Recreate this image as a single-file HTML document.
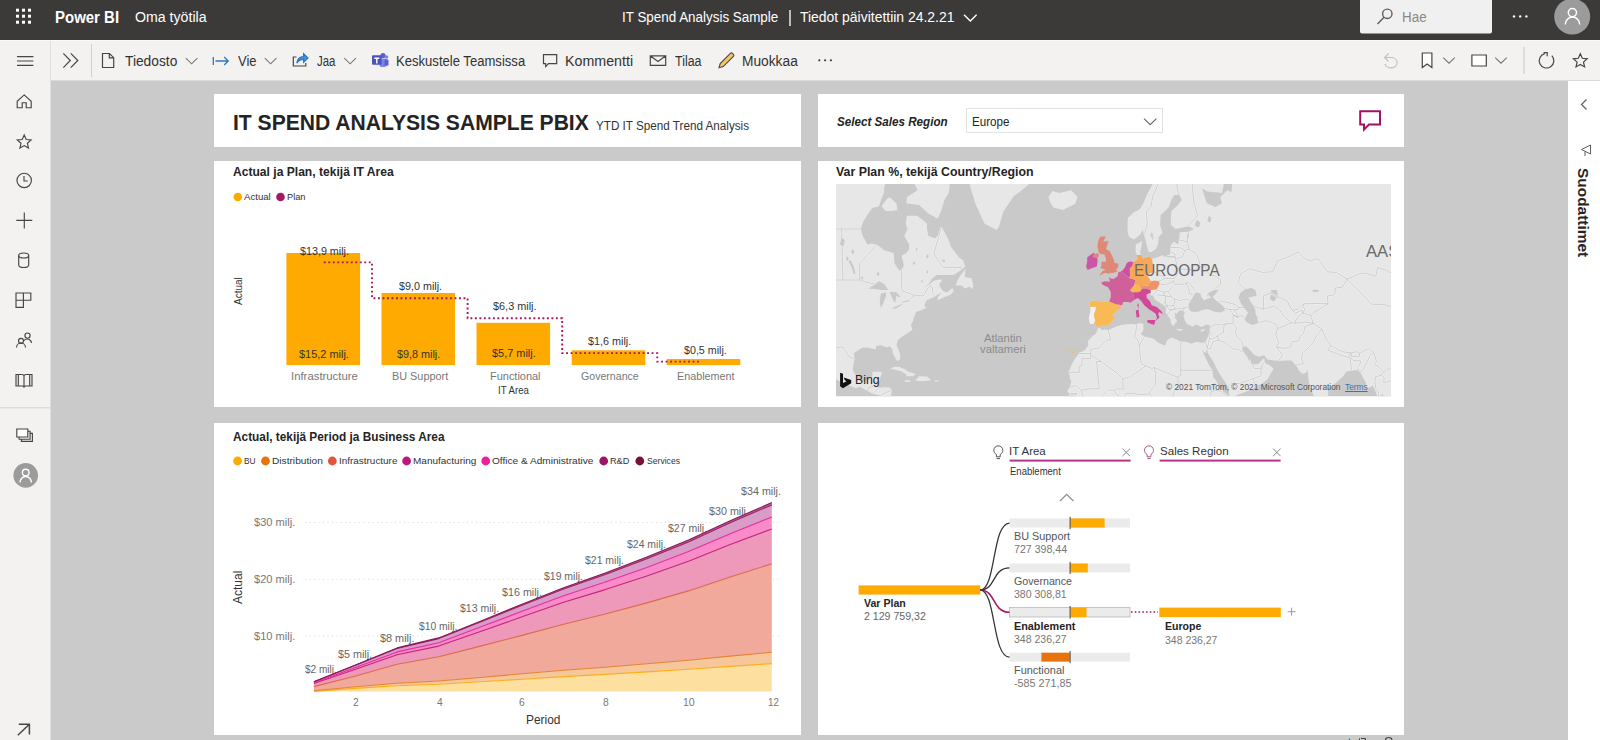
<!DOCTYPE html>
<html><head><meta charset="utf-8">
<style>
*{box-sizing:border-box;margin:0;padding:0}
html,body{width:1600px;height:740px;overflow:hidden}
body{position:relative;background:#cacaca;font-family:"Liberation Sans",sans-serif;color:#252423}
.abs{position:absolute}
.t{position:absolute;white-space:nowrap;line-height:1}
#topbar{left:0;top:0;width:1600px;height:40px;background:#3b3a39}
#toolbar{left:0;top:40px;width:1600px;height:41px;background:#f3f2f1}
#leftnav{left:0;top:81px;width:51px;height:659px;background:#f3f2f1}
#rightpane{left:1568px;top:81px;width:32px;height:659px;background:#fff}
.card{position:absolute;background:#fff}
svg{position:absolute;overflow:visible}
</style></head><body>
<!--TOPBAR-->
<div id="topbar" class="abs">
<svg style="left:0;top:0" width="1600" height="40">
 <g fill="#fff">
  <rect x="16" y="8.7" width="3" height="3"/><rect x="22" y="8.7" width="3" height="3"/><rect x="28" y="8.7" width="3" height="3"/>
  <rect x="16" y="14.7" width="3" height="3"/><rect x="22" y="14.7" width="3" height="3"/><rect x="28" y="14.7" width="3" height="3"/>
  <rect x="16" y="20.7" width="3" height="3"/><rect x="22" y="20.7" width="3" height="3"/><rect x="28" y="20.7" width="3" height="3"/>
 </g>
 <path d="M1360 0H1492V31.5a2 2 0 0 1-2 2H1362a2 2 0 0 1-2-2Z" fill="#f0f0f0"/>
 <g fill="none" stroke="#605e5c" stroke-width="1.4"><circle cx="1387.3" cy="13.8" r="4.7"/><path d="M1384 17.3L1377.5 24"/></g>
 <g fill="#fff"><circle cx="1514" cy="16.4" r="1.2"/><circle cx="1520.2" cy="16.4" r="1.2"/><circle cx="1526.4" cy="16.4" r="1.2"/></g>
 <circle cx="1572.2" cy="16.6" r="18" fill="#9b9b9b"/>
 <g fill="none" stroke="#fff" stroke-width="1.5"><circle cx="1572.4" cy="12.6" r="4.1"/><path d="M1565.3 24.5a7.2 7.5 0 0 1 14.4 0"/></g>
 <path d="M964 14.700l6.300 6.300 6.300-6.300" fill="none" stroke="#fff" stroke-width="1.400"/>
</svg>
<span class="t" id="tPBI" style="top:10px;font-size:16px;font-weight:bold;color:#fff;left:55.36px;transform-origin:0 0;transform:scaleX(0.9356)">Power BI</span>
<span class="t" id="tOma" style="top:10px;font-size:14px;color:#fff;left:135.40px;transform-origin:0 0;transform:scaleX(1.0111)">Oma työtila</span>
<span class="t" id="tITS" style="top:10px;font-size:14px;color:#fff;left:622.04px;transform-origin:0 0;transform:scaleX(0.9577)">IT Spend Analysis Sample</span>
<div class="abs" style="left:789px;top:10px;width:1.500px;height:15.500px;background:#bebbb8"></div>
<span class="t" id="tTied" style="top:10px;font-size:14px;color:#fff;left:800.00px;transform-origin:0 0;transform:scaleX(0.9958)">Tiedot päivitettiin 24.2.21</span>
<span class="t" id="tHae" style="top:10px;font-size:14px;color:#8a8886;left:1402.44px;transform-origin:0 0;transform:scaleX(0.9580)">Hae</span>
</div>
<!--TOOLBAR-->
<div id="toolbar" class="abs">
<svg style="left:0;top:0" width="1600" height="41">
 <rect x="0" y="0" width="1600" height="1" fill="#faf9f8"/>
 <rect x="51" y="40" width="1549" height="1" fill="#dddbd9"/>
 <rect x="50" y="1" width="1" height="40" fill="#e1dfdd"/>
 <rect x="91" y="4" width="1" height="33" fill="#d2d0ce"/>
 <rect x="1523.5" y="7" width="1" height="27" fill="#c8c6c4"/>
 <g stroke="#484644" stroke-width="1.2" fill="none">
  <path d="M17 16.6H33.4M17 21H33.4M17 25.4H33.4"/>
  <path d="M63.3 13.3l7 7.2-7 7.2M70.8 13.3l7 7.2-7 7.2"/>
  <!-- file -->
  <path d="M102.5 13.5h7l4.2 4.2v9.8h-11.2zM109.3 13.6v4.3h4.3"/>
  <!-- chevrons -->
  <path stroke="#7a7876" stroke-width="1.1" d="M185.8 18.2l5.8 5.6 5.8-5.6M264.8 18.2l5.8 5.6 5.8-5.6M344.3 18.2l5.8 5.6 5.8-5.6M1443.2 17.6l5.8 5.6 5.8-5.6M1495.2 17.6l5.8 5.6 5.8-5.6"/>
  <!-- comment -->
  <path d="M543.5 14.6h13.2v9h-8.2l-2.8 3v-3h-2.2z"/>
  <!-- mail -->
  <path d="M650.3 15.8h15.4v9.6h-15.4zM650.5 16l7.5 5.5 7.5-5.500"/>
  <!-- bookmark -->
  <path fill="#fff" d="M1422.3 13h9.6v14.6l-4.8-3.6-4.8 3.600z"/>
  <!-- rect -->
  <path fill="#fff" d="M1471.9 15h14.400v11h-14.400z"/>
  <!-- refresh -->
  <path d="M1544.800 13.600a7.300 7.300 0 1 0 7 2M1543.600 12.600h3.600v3.600"/>
  <!-- star -->
  <path d="M1580.300 13.800l2 4.500 4.900.5-3.700 3.300 1.100 4.800-4.300-2.500-4.300 2.500 1.100-4.800-3.700-3.300 4.900-.5z"/>
 </g>
 <!-- undo (disabled) -->
 <g stroke="#c2c0be" stroke-width="1.200" fill="none"><path d="M1385 17.500h6a6.200 5.200 0 1 1-6 6.500M1388.500 13.500l-3.800 4 3.800 4"/></g>
 <!-- export arrow -->
 <g stroke="#2b79c2" stroke-width="1.300" fill="none"><path d="M213.300 17v8M215.500 21h12.500M224.200 17l4 4-4 4"/></g>
 <!-- share -->
 <g fill="none" stroke-width="1.200"><path d="M296.500 17h-3.200v9h12.500v-3" stroke="#484644"/><path d="M296.800 23.200c.6-4.500 3.400-6.500 6.800-6.600v-3l4.400 4.400-4.400 4.400v-3c-3-.1-5 .8-6.800 3.800z" stroke="#2b79c2" fill="#4a90d9"/></g>
 <!-- teams -->
 <g><circle cx="383" cy="15.500" r="2.600" fill="#5b5fc7"/><circle cx="386.600" cy="17" r="1.700" fill="#7b83eb"/><rect x="379.500" y="18.600" width="7" height="8.500" rx="2" fill="#7b83eb"/><rect x="384.500" y="19.200" width="4" height="6.500" rx="1.500" fill="#5b5fc7"/><rect x="372" y="15.200" width="9.600" height="9.600" rx="1" fill="#4b53bc"/><path d="M374.300 17.600h5v1.300h-1.800v4.500h-1.400v-4.500h-1.800z" fill="#fff"/></g>
 <!-- pencil -->
 <g stroke="#484644" stroke-width="1.100" fill="#f4c56a"><path d="M719 27.800l1.200-4.200 10.200-10.200a1.500 1.500 0 0 1 2.100 0l.9.900a1.500 1.500 0 0 1 0 2.100l-10.200 10.200z"/></g>
 <g fill="#484644"><circle cx="819.300" cy="20.300" r="1.150"/><circle cx="825.100" cy="20.300" r="1.150"/><circle cx="830.900" cy="20.300" r="1.150"/></g>
</svg>
<span class="t" id="tTie" style="top:13.500px;font-size:14px;color:#323130;left:124.70px;transform-origin:0 0;transform:scaleX(0.9833)">Tiedosto</span>
<span class="t" id="tVie" style="top:13.500px;font-size:14px;color:#323130;left:237.80px;transform-origin:0 0;transform:scaleX(0.9260)">Vie</span>
<span class="t" id="tJaa" style="top:13.500px;font-size:14px;color:#323130;left:317.10px;transform-origin:0 0;transform:scaleX(0.8163)">Jaa</span>
<span class="t" id="tKes" style="top:13.500px;font-size:14px;color:#323130;left:395.67px;transform-origin:0 0;transform:scaleX(0.9342)">Keskustele Teamsissa</span>
<span class="t" id="tKom" style="top:13.500px;font-size:14px;color:#323130;left:565.23px;transform-origin:0 0;transform:scaleX(1.0175)">Kommentti</span>
<span class="t" id="tTil" style="top:13.500px;font-size:14px;color:#323130;left:674.60px;transform-origin:0 0;transform:scaleX(0.8872)">Tilaa</span>
<span class="t" id="tMuo" style="top:13.500px;font-size:14px;color:#323130;left:742.42px;transform-origin:0 0;transform:scaleX(0.9818)">Muokkaa</span>
</div>
<!--LEFTNAV-->
<div id="leftnav" class="abs">
<svg style="left:0;top:-81px" width="51" height="740">
 <rect x="50" y="81" width="1" height="659" fill="#e1dfdd"/>
 <rect x="0" y="407" width="50" height="1.500" fill="#dedcda"/>
 <g stroke="#484644" stroke-width="1.150" fill="none" stroke-linejoin="miter">
  <!-- home -->
  <path d="M17.200 101.200l7-6.300 7 6.300v6.500h-5v-5h-4v5h-5z"/>
  <!-- star -->
  <path d="M24.200 135l2 4.500 4.900.5-3.700 3.300 1.100 4.800-4.300-2.500-4.300 2.500 1.100-4.800-3.700-3.300 4.900-.5z"/>
  <!-- clock -->
  <circle cx="24.200" cy="180.400" r="7.200"/><path d="M24 176v5h3.800"/>
  <!-- plus -->
  <path d="M16.300 220.400h16M24.300 212.400v16"/>
  <!-- cylinder -->
  <path d="M18.700 255.500v9.500a5 2.500 0 0 0 10 0v-9.500"/><ellipse cx="23.700" cy="255.500" rx="5" ry="2.500"/>
  <!-- apps -->
  <path d="M16 293h14.800v7.200h-7.400v7.200h-7.400zM23.400 293v7.200M16 300.200h7.400"/>
  <!-- people -->
  <circle cx="27.500" cy="335.600" r="2.600"/><circle cx="21" cy="340.800" r="2.500"/><path d="M16.500 347.500a4.500 4.500 0 0 1 9 0M24 340.500a4.300 4.300 0 0 1 7.500 2.500"/>
  <!-- book -->
  <path d="M16 374.500h6a2 2 0 0 1 2 1.500a2 2 0 0 1 2-1.500h6v11.500h-6a2 2 0 0 0-2 1a2 2 0 0 0-2-1h-6zM24 376v11M18.300 374.500v11M29.700 374.500v11"/>
  <!-- pages -->
  <path d="M27.800 431.200h2.300v8h-11v-2.200M30.100 433.400h2.300v8h-11v-2.200"/><path fill="#fff" d="M16.800 429h11v8h-11z"/>
  <!-- arrow -->
  <path d="M17.800 735.300L29.400 724.300M18.800 724.300H29.400V734.600" stroke-width="1.500"/>
 </g>
 <circle cx="25.700" cy="475.400" r="12.300" fill="#9b9b9b"/>
 <g fill="none" stroke="#fff" stroke-width="1.400"><circle cx="25.700" cy="472.500" r="3.300"/><path d="M20 482.500a5.700 6 0 0 1 11.400 0"/></g>
</svg>
</div>
<!--RIGHTPANE-->
<div id="rightpane" class="abs">
<svg style="left:0;top:0" width="32" height="659">
 <path d="M18.500 18.500l-5 5 5 5" fill="none" stroke="#605e5c" stroke-width="1.200"/>
 <path d="M22.500 64l-9 4.500 9 4.500zM17 70.500v4.500" fill="none" stroke="#605e5c" stroke-width="1"/>
</svg>
<span class="t" id="tSuo" style="left:23px;top:87px;font-size:15px;font-weight:bold;color:#252423;transform-origin:0 0;transform:rotate(90deg) scaleX(1.03)">Suodattimet</span>
</div>
<!--CARDS-->
<div class="card" style="left:214px;top:94px;width:586.5px;height:52.5px"></div>
<div class="card" style="left:214px;top:161px;width:586.5px;height:245.5px"></div>
<div class="card" style="left:214px;top:423px;width:586.5px;height:311.5px"></div>
<div class="card" style="left:817.5px;top:94px;width:586px;height:52.5px"></div>
<div class="card" style="left:817.5px;top:161px;width:586px;height:245.5px"></div>
<div class="card" style="left:817.5px;top:423px;width:586px;height:311.5px"></div>
<span class="t" id="tTitle" style="top:112.00px;font-size:22.5px;font-weight:bold;color:#252423;left:232.56px;transform-origin:0 0;transform:scaleX(0.9371)">IT SPEND ANALYSIS SAMPLE PBIX</span>
<span class="t" id="tYTD" style="top:120.00px;font-size:12px;color:#333;left:596.20px;transform-origin:0 0;transform:scaleX(0.9736)">YTD IT Spend Trend Analysis</span>
<span class="t" id="tC2" style="top:166.00px;font-size:12.5px;font-weight:bold;color:#252423;left:233.10px;transform-origin:0 0;transform:scaleX(0.9668)">Actual ja Plan, tekijä IT Area</span>
<svg style="left:0;top:0" width="1600" height="740"><circle cx="237.8" cy="197" r="4.3" fill="#ffaa00"/><circle cx="280.5" cy="197" r="4.3" fill="#a4195f"/><rect x="286.4" y="253" width="73.7" height="112.1" fill="#ffaa00"/><rect x="381.5" y="293" width="73.5" height="72.1" fill="#ffaa00"/><rect x="476.5" y="322.8" width="73.6" height="42.3" fill="#ffaa00"/><rect x="571.7" y="350.3" width="73.6" height="14.8" fill="#ffaa00"/><rect x="666.7" y="359" width="73.6" height="6.1" fill="#ffaa00"/><path d="M323.8 262.4H372V298.2H467.600V318.300H562.200V353.100H657.300V361.600H701" fill="none" stroke="#a4195f" stroke-width="1.900" stroke-dasharray="1.900 2.600"/></svg>
<span class="t" id="tL1a" style="top:192.00px;font-size:9.5px;color:#333;left:244.00px;transform-origin:0 0;transform:scaleX(1.0117)">Actual</span>
<span class="t" id="tL1b" style="top:192.00px;font-size:9.5px;color:#333;left:287.10px;transform-origin:0 0;transform:scaleX(0.9717)">Plan</span>
<span class="t" id="tB1" style="top:246.00px;font-size:11px;color:#333;left:300.40px;transform-origin:0 0;transform:scaleX(0.9765)">$13,9 milj.</span>
<span class="t" id="tB2" style="top:349.00px;font-size:11px;color:#333;left:298.80px;transform-origin:0 0;transform:scaleX(0.9945)">$15,2 milj.</span>
<span class="t" id="tB3" style="top:281.00px;font-size:11px;color:#333;left:398.70px;transform-origin:0 0;transform:scaleX(0.9782)">$9,0 milj.</span>
<span class="t" id="tB4" style="top:349.00px;font-size:11px;color:#333;left:397.30px;transform-origin:0 0;transform:scaleX(0.9827)">$9,8 milj.</span>
<span class="t" id="tB5" style="top:301.00px;font-size:11px;color:#333;left:493.40px;transform-origin:0 0;transform:scaleX(0.9895)">$6,3 milj.</span>
<span class="t" id="tB6" style="top:348.00px;font-size:11px;color:#333;left:492.25px;transform-origin:0 0;transform:scaleX(0.9929)">$5,7 milj.</span>
<span class="t" id="tB7" style="top:336.00px;font-size:11px;color:#333;left:588.40px;transform-origin:0 0;transform:scaleX(0.9827)">$1,6 milj.</span>
<span class="t" id="tB8" style="top:345.00px;font-size:11px;color:#333;left:683.50px;transform-origin:0 0;transform:scaleX(0.9725)">$0,5 milj.</span>
<span class="t" id="tX1" style="top:371.00px;font-size:11px;color:#777;left:290.67px;transform-origin:0 0;transform:scaleX(1.0316)">Infrastructure</span>
<span class="t" id="tX2" style="top:371.00px;font-size:11px;color:#777;left:391.80px;transform-origin:0 0;transform:scaleX(0.9875)">BU Support</span>
<span class="t" id="tX3" style="top:371.00px;font-size:11px;color:#777;left:489.60px;transform-origin:0 0;transform:scaleX(0.9959)">Functional</span>
<span class="t" id="tX4" style="top:371.00px;font-size:11px;color:#777;left:580.90px;transform-origin:0 0;transform:scaleX(0.9631)">Governance</span>
<span class="t" id="tX5" style="top:371.00px;font-size:11px;color:#777;left:676.60px;transform-origin:0 0;transform:scaleX(0.9804)">Enablement</span>
<span class="t" id="tX6" style="top:385.00px;font-size:11px;color:#333;left:497.92px;transform-origin:0 0;transform:scaleX(0.8762)">IT Area</span>
<span class="t" style="left:233.500px;top:304.500px;font-size:10px;color:#333;transform-origin:0 0;transform:rotate(-90deg)">Actual</span>
<span class="t" id="tC3" style="top:431.00px;font-size:12.5px;font-weight:bold;color:#252423;left:233.30px;transform-origin:0 0;transform:scaleX(0.9475)">Actual, tekijä Period ja Business Area</span>
<span class="t" id="tA0" style="top:456.00px;font-size:9.5px;color:#333;left:244.20px;transform-origin:0 0;transform:scaleX(0.8773)">BU</span>
<span class="t" id="tA1" style="top:456.00px;font-size:9.5px;color:#333;left:272.30px;transform-origin:0 0;transform:scaleX(1.0691)">Distribution</span>
<span class="t" id="tA2" style="top:456.00px;font-size:9.5px;color:#333;left:338.75px;transform-origin:0 0;transform:scaleX(1.0443)">Infrastructure</span>
<span class="t" id="tA3" style="top:456.00px;font-size:9.5px;color:#333;left:413.20px;transform-origin:0 0;transform:scaleX(1.0523)">Manufacturing</span>
<span class="t" id="tA4" style="top:456.00px;font-size:9.5px;color:#333;left:492.30px;transform-origin:0 0;transform:scaleX(1.0624)">Office &amp; Administrative</span>
<span class="t" id="tA5" style="top:456.00px;font-size:9.5px;color:#333;left:610.30px;transform-origin:0 0;transform:scaleX(0.9655)">R&amp;D</span>
<span class="t" id="tA6" style="top:456.00px;font-size:9.5px;color:#333;left:646.60px;transform-origin:0 0;transform:scaleX(0.9052)">Services</span>
<svg style="left:0;top:0" width="1600" height="740"><circle cx="237.6" cy="461" r="4.400" fill="#ffaa00"/><circle cx="265.5" cy="461" r="4.400" fill="#e8720c"/><circle cx="332.3" cy="461" r="4.400" fill="#de5540"/><circle cx="406.6" cy="461" r="4.400" fill="#c0167a"/><circle cx="485.7" cy="461" r="4.400" fill="#ee1d9a"/><circle cx="603.7" cy="461" r="4.400" fill="#9c1668"/><circle cx="639.8" cy="461" r="4.400" fill="#7a1035"/><path d="M305 522.5H781" stroke="#d6d6d6" stroke-width="1" stroke-dasharray="1 3.500"/><path d="M305 579.3H781" stroke="#d6d6d6" stroke-width="1" stroke-dasharray="1 3.500"/><path d="M305 636H781" stroke="#d6d6d6" stroke-width="1" stroke-dasharray="1 3.500"/></svg>
<span class="t" id="tD0" style="top:664.00px;font-size:11px;color:#666;left:305.00px;transform-origin:0 0;transform:scaleX(0.9142)">$2 milj.</span>
<span class="t" id="tD1" style="top:649.00px;font-size:11px;color:#666;left:337.70px;transform-origin:0 0;transform:scaleX(0.9803)">$5 milj.</span>
<span class="t" id="tD2" style="top:633.00px;font-size:11px;color:#666;left:379.60px;transform-origin:0 0;transform:scaleX(0.9889)">$8 milj.</span>
<span class="t" id="tD3" style="top:621.00px;font-size:11px;color:#666;left:418.50px;transform-origin:0 0;transform:scaleX(0.9363)">$10 milj.</span>
<span class="t" id="tD4" style="top:603.00px;font-size:11px;color:#666;left:460.00px;transform-origin:0 0;transform:scaleX(0.9535)">$13 milj.</span>
<span class="t" id="tD5" style="top:587.00px;font-size:11px;color:#666;left:501.60px;transform-origin:0 0;transform:scaleX(0.9755)">$16 milj.</span>
<span class="t" id="tD6" style="top:571.00px;font-size:11px;color:#666;left:543.80px;transform-origin:0 0;transform:scaleX(0.9510)">$19 milj.</span>
<span class="t" id="tD7" style="top:555.00px;font-size:11px;color:#666;left:585.00px;transform-origin:0 0;transform:scaleX(0.9510)">$21 milj.</span>
<span class="t" id="tD8" style="top:539.00px;font-size:11px;color:#666;left:626.50px;transform-origin:0 0;transform:scaleX(0.9510)">$24 milj.</span>
<span class="t" id="tD9" style="top:523.00px;font-size:11px;color:#666;left:668.00px;transform-origin:0 0;transform:scaleX(0.9535)">$27 milj.</span>
<span class="t" id="tD10" style="top:506.00px;font-size:11px;color:#666;left:709.20px;transform-origin:0 0;transform:scaleX(0.9755)">$30 milj.</span>
<span class="t" id="tD11" style="top:486.00px;font-size:11px;color:#666;left:740.70px;transform-origin:0 0;transform:scaleX(0.9755)">$34 milj.</span>
<svg style="left:0;top:0" width="1600" height="740"><path d="M313.9 691.4 355.5 688.4 397.1 685.8 438.7 684.3 480.4 681.8 522.0 679.2 563.6 676.6 605.3 674.4 646.9 671.9 688.5 669.3 730.2 666.4 771.8 663.6 L771.8 691.6 730.2 691.6 688.5 691.6 646.9 691.6 605.3 691.6 563.6 691.6 522.0 691.6 480.4 691.6 438.7 691.6 397.1 691.6 355.5 691.6 313.9 691.6 Z" fill="#fde0a0"/><path d="M313.9 690.8 355.5 686.8 397.1 683.2 438.7 681.0 480.4 677.5 522.0 673.8 563.6 670.3 605.3 667.2 646.9 663.8 688.5 660.2 730.2 656.1 771.8 652.2 L771.8 663.6 730.2 666.4 688.5 669.3 646.9 671.9 605.3 674.4 563.6 676.6 522.0 679.2 480.4 681.8 438.7 684.3 397.1 685.8 355.5 688.4 313.9 691.4 Z" fill="#f6c79a"/><path d="M313.9 686.6 355.5 676.0 397.1 664.2 438.7 656.8 480.4 646.1 522.0 635.4 563.6 624.2 605.3 614.0 646.9 602.9 688.5 590.9 730.2 577.1 771.8 563.8 L771.8 652.2 730.2 656.1 688.5 660.2 646.9 663.8 605.3 667.2 563.6 670.3 522.0 673.8 480.4 677.5 438.7 681.0 397.1 683.2 355.5 686.8 313.9 690.8 Z" fill="#f0a99a"/><path d="M313.9 683.5 355.5 669.2 397.1 654.7 438.7 646.1 480.4 631.6 522.0 616.8 563.6 602.3 605.3 589.6 646.9 575.9 688.5 561.3 730.2 544.6 771.8 529.0 L771.8 563.8 730.2 577.1 688.5 590.9 646.9 602.9 605.3 614.0 563.6 624.2 522.0 635.4 480.4 646.1 438.7 656.8 397.1 664.2 355.5 676.0 313.9 686.6 Z" fill="#ee99b9"/><path d="M313.9 682.8 355.5 667.5 397.1 651.9 438.7 642.7 480.4 627.1 522.0 611.2 563.6 595.7 605.3 582.1 646.9 567.4 688.5 551.6 730.2 533.8 771.8 517.0 L771.8 529.0 730.2 544.6 688.5 561.3 646.9 575.9 605.3 589.6 563.6 602.3 522.0 616.8 480.4 631.6 438.7 646.1 397.1 654.7 355.5 669.2 313.9 683.5 Z" fill="#f98bc9"/><path d="M313.9 681.8 355.5 665.2 397.1 648.4 438.7 638.6 480.4 622.1 522.0 605.2 563.6 589.0 605.3 574.4 646.9 558.7 688.5 541.9 730.2 522.8 771.8 504.9 L771.8 517.0 730.2 533.8 688.5 551.6 646.9 567.4 605.3 582.1 563.6 595.7 522.0 611.2 480.4 627.1 438.7 642.7 397.1 651.9 355.5 667.5 313.9 682.8 Z" fill="#d99cc6"/><path d="M313.9 681.7 355.5 664.9 397.1 647.9 438.7 637.9 480.4 621.2 522.0 604.2 563.6 587.7 605.3 573.0 646.9 557.1 688.5 540.0 730.2 520.7 771.8 502.6 L771.8 504.9 730.2 522.8 688.5 541.9 646.9 558.7 605.3 574.4 563.6 589.0 522.0 605.2 480.4 622.1 438.7 638.6 397.1 648.4 355.5 665.2 313.9 681.8 Z" fill="#b0608a"/><path d="M313.9 691.4 355.5 688.4 397.1 685.8 438.7 684.3 480.4 681.8 522.0 679.2 563.6 676.6 605.3 674.4 646.9 671.9 688.5 669.3 730.2 666.4 771.8 663.6" fill="none" stroke="#ffae1a" stroke-width="1.100" stroke-linejoin="round"/><path d="M313.9 690.8 355.5 686.8 397.1 683.2 438.7 681.0 480.4 677.5 522.0 673.8 563.6 670.3 605.3 667.2 646.9 663.8 688.5 660.2 730.2 656.1 771.8 652.2" fill="none" stroke="#e5842e" stroke-width="1.100" stroke-linejoin="round"/><path d="M313.9 686.6 355.5 676.0 397.1 664.2 438.7 656.8 480.4 646.1 522.0 635.4 563.6 624.2 605.3 614.0 646.9 602.9 688.5 590.9 730.2 577.1 771.8 563.8" fill="none" stroke="#dc6a4a" stroke-width="1.100" stroke-linejoin="round"/><path d="M313.9 683.5 355.5 669.2 397.1 654.7 438.7 646.1 480.4 631.6 522.0 616.8 563.6 602.3 605.3 589.6 646.9 575.9 688.5 561.3 730.2 544.6 771.8 529.0" fill="none" stroke="#c2247c" stroke-width="1.100" stroke-linejoin="round"/><path d="M313.9 682.8 355.5 667.5 397.1 651.9 438.7 642.7 480.4 627.1 522.0 611.2 563.6 595.7 605.3 582.1 646.9 567.4 688.5 551.6 730.2 533.8 771.8 517.0" fill="none" stroke="#ea2aa0" stroke-width="1.100" stroke-linejoin="round"/><path d="M313.9 681.8 355.5 665.2 397.1 648.4 438.7 638.6 480.4 622.1 522.0 605.2 563.6 589.0 605.3 574.4 646.9 558.7 688.5 541.9 730.2 522.8 771.8 504.9" fill="none" stroke="#9d2172" stroke-width="1.100" stroke-linejoin="round"/><path d="M313.9 681.7 355.5 664.9 397.1 647.9 438.7 637.9 480.4 621.2 522.0 604.2 563.6 587.7 605.3 573.0 646.9 557.1 688.5 540.0 730.2 520.7 771.8 502.6" fill="none" stroke="#8c1a58" stroke-width="1.100" stroke-linejoin="round"/></svg>
<span class="t" id="tY0" style="top:517.00px;font-size:11px;color:#777;left:254.10px;transform-origin:0 0;transform:scaleX(1.0060)">$30 milj.</span>
<span class="t" id="tY1" style="top:574.00px;font-size:11px;color:#777;left:254.10px;transform-origin:0 0;transform:scaleX(1.0060)">$20 milj.</span>
<span class="t" id="tY2" style="top:631.00px;font-size:11px;color:#777;left:254.10px;transform-origin:0 0;transform:scaleX(1.0060)">$10 milj.</span>
<span class="t" id="tP0" style="top:697.00px;font-size:11px;color:#777;left:352.80px;transform-origin:0 0;transform:scaleX(0.9333)">2</span>
<span class="t" id="tP1" style="top:697.00px;font-size:11px;color:#777;left:436.50px;transform-origin:0 0;transform:scaleX(0.9333)">4</span>
<span class="t" id="tP2" style="top:697.00px;font-size:11px;color:#777;left:519.20px;transform-origin:0 0;transform:scaleX(0.9333)">6</span>
<span class="t" id="tP3" style="top:697.00px;font-size:11px;color:#777;left:602.60px;transform-origin:0 0;transform:scaleX(0.9333)">8</span>
<span class="t" id="tP4" style="top:697.00px;font-size:11px;color:#777;left:683.30px;transform-origin:0 0;transform:scaleX(0.9573)">10</span>
<span class="t" id="tP5" style="top:697.00px;font-size:11px;color:#777;left:767.60px;transform-origin:0 0;transform:scaleX(0.8830)">12</span>
<span class="t" id="tPer" style="top:714.00px;font-size:12px;color:#333;left:525.60px;transform-origin:0 0;transform:scaleX(0.9908)">Period</span>
<span class="t" style="left:232px;top:603.500px;font-size:12px;color:#333;transform-origin:0 0;transform:rotate(-90deg)">Actual</span>
<span class="t" id="tSel" style="top:115.00px;font-size:13px;font-weight:bold;font-style:italic;color:#252423;left:836.90px;transform-origin:0 0;transform:scaleX(0.8956)">Select Sales Region</span>
<div class="abs" style="left:966px;top:108px;width:196.500px;height:24.500px;border:1px solid #e3e3e3;background:#fff"></div>
<span class="t" id="tEur" style="top:116.00px;font-size:12px;color:#252423;left:972.30px;transform-origin:0 0;transform:scaleX(0.9687)">Europe</span>
<svg style="left:0;top:0" width="1600" height="740"><path d="M1144 118.700l6.200 6 6.200-6" fill="none" stroke="#666" stroke-width="1.100"/><path d="M1360.200 111.300h19.800v13.300h-11l-5 5v-5h-3.800z" fill="none" stroke="#a01264" stroke-width="2" stroke-linejoin="miter"/></svg>
<span class="t" id="tC5" style="top:166.00px;font-size:12.5px;font-weight:bold;color:#252423;left:836.00px;transform-origin:0 0;transform:scaleX(0.9879)">Var Plan %, tekijä Country/Region</span>
<svg style="left:0;top:0" width="1600" height="740"><defs><clipPath id="mc"><rect x="836" y="184" width="555" height="212.300"/></clipPath></defs><g clip-path="url(#mc)"><rect x="836" y="184" width="555" height="213" fill="#c9c9c9"/><path d="M881.1 396.9 880.0 395.5 877.6 394.9 870.9 393.0 867.2 390.8 859.7 386.7 856.2 388.2 847.2 384.8 840.2 381.6 833.8 378.0 830.9 373.1 820.2 346.5 820.2 120.3 895.0 120.3 895.0 165.0 887.0 176.3 883.7 190.3 884.3 191.6 881.6 198.8 878.9 206.2 872.3 208.1 868.3 213.4 862.9 222.5 860.8 229.0 862.4 235.3 867.5 244.4 871.5 243.4 877.6 244.9 884.3 250.2 893.6 253.0 894.4 263.0 899.0 270.4 901.4 270.8 903.8 265.2 901.6 255.8 906.4 253.0 909.1 249.2 909.1 244.4 904.3 235.8 907.5 229.0 905.6 223.6 907.0 215.7 917.1 215.7 923.0 220.3 927.0 223.6 927.0 229.0 928.3 235.8 935.0 238.4 939.0 234.3 941.4 226.9 944.4 231.7 948.4 239.4 951.0 246.8 956.4 253.9 959.0 257.6 963.0 259.9 965.2 266.5 961.2 270.0 953.7 275.1 936.6 275.1 931.5 279.2 929.7 282.8 923.8 288.8 927.0 286.0 933.7 280.8 940.4 279.2 942.2 280.8 939.0 284.0 940.4 287.6 943.0 291.1 947.0 292.6 952.4 288.0 953.7 291.1 951.0 294.5 944.4 297.2 937.4 300.2 937.7 297.2 941.7 292.6 937.7 294.5 935.0 296.4 931.8 297.9 926.5 300.5 924.3 305.3 925.1 306.7 927.0 307.8 923.0 309.2 921.7 310.3 916.3 311.7 913.9 317.6 913.1 320.7 911.0 324.4 912.3 330.0 905.6 334.2 900.6 337.7 897.9 340.2 896.6 345.2 899.0 351.1 900.3 355.6 900.0 359.2 897.6 361.2 895.5 358.6 892.8 353.2 892.3 349.2 889.6 346.2 887.0 347.4 881.1 345.2 878.9 345.5 876.3 345.9 875.7 349.5 868.3 347.7 863.5 347.4 860.8 348.6 853.8 353.2 854.5 358.9 852.6 369.7 857.3 378.2 861.9 381.2 868.8 379.9 872.3 376.5 872.5 371.7 878.9 371.7 882.1 372.6 879.5 380.2 876.8 387.2 880.3 387.8 884.3 387.2 889.6 387.5 891.8 390.0 891.0 396.9 Z" fill="#e7e7e7"/><path d="M937.7 218.6 928.3 213.4 919.0 205.0 906.2 203.2 907.0 196.9 917.7 190.3 911.0 176.3 911.0 120.3 948.4 120.3 949.7 186.9 948.4 193.6 944.4 200.0 941.4 210.5 Z" fill="#e7e7e7"/><path d="M885.6 211.1 881.6 206.2 887.0 198.8 889.6 196.9 896.3 203.2 897.6 209.9 892.3 211.1 Z" fill="#e7e7e7"/><path d="M972.4 289.2 973.2 285.6 972.4 281.2 971.1 278.0 964.6 277.1 965.7 269.1 960.6 275.1 957.7 280.0 955.6 285.6 961.7 285.6 964.9 288.4 969.7 286.8 Z" fill="#e7e7e7"/><path d="M996.7 230.1 984.4 223.6 975.9 205.0 970.3 186.9 959.0 120.3 1065.8 120.3 1055.2 165.0 1033.8 179.9 1021.8 190.3 1013.5 196.2 1003.1 212.2 999.1 226.3 Z" fill="#e7e7e7"/><path d="M1063.2 209.9 1053.3 207.5 1049.8 201.3 1048.5 196.9 1052.5 191.0 1059.2 192.9 1071.2 190.3 1077.6 196.9 1075.2 203.8 Z" fill="#e7e7e7"/><path d="M1098.9 327.3 1097.3 326.7 1094.1 323.4 1090.1 324.0 1088.8 318.3 1090.7 310.3 1089.3 303.1 1092.8 300.5 1099.2 301.3 1103.8 301.6 1109.1 301.6 1110.7 297.2 1110.7 291.9 1108.0 287.2 1102.4 284.8 1101.1 282.4 1104.6 281.2 1109.9 281.6 1108.8 277.1 1111.0 278.4 1113.9 278.8 1117.6 275.9 1118.4 272.1 1122.4 270.4 1124.8 267.4 1126.7 263.0 1129.9 261.2 1135.3 260.8 1137.7 259.0 1136.9 254.9 1135.5 251.6 1135.8 244.4 1142.2 240.9 1141.4 246.8 1140.1 251.6 1140.6 254.9 1142.7 257.2 1143.0 258.5 1145.9 257.6 1149.7 256.7 1151.8 259.0 1156.6 257.6 1162.8 254.9 1163.8 256.7 1166.8 256.2 1170.0 254.4 1170.2 250.6 1171.0 244.4 1174.0 241.4 1178.0 244.4 1179.3 237.4 1179.8 232.2 1188.7 231.7 1194.0 229.0 1188.7 226.3 1180.7 228.0 1175.3 229.0 1170.8 224.7 1170.8 218.0 1171.3 211.1 1176.6 206.2 1181.7 200.0 1179.3 194.9 1174.0 194.9 1171.3 200.0 1168.6 207.5 1160.6 215.1 1160.1 225.3 1162.5 232.7 1158.8 236.9 1158.0 244.4 1156.1 248.7 1151.8 252.1 1148.6 252.1 1147.5 248.3 1145.7 240.9 1143.8 234.3 1142.5 229.6 1140.6 234.3 1133.9 239.4 1129.1 236.9 1127.8 232.7 1127.5 226.9 1127.8 218.0 1133.9 212.2 1139.8 209.3 1143.3 203.2 1147.5 193.6 1152.6 184.2 1154.0 172.6 1167.3 120.3 1407.6 120.3 1407.6 398.2 1383.6 398.2 1383.6 396.0 1382.2 394.1 1380.6 396.0 1379.6 398.2 1377.4 398.2 1377.2 396.0 1375.0 390.0 1372.9 385.8 1368.9 387.8 1365.4 387.2 1366.2 383.0 1361.7 375.4 1359.0 369.4 1355.5 370.3 1350.2 370.8 1346.2 371.7 1343.0 376.5 1336.3 382.5 1330.7 386.4 1327.8 388.6 1328.3 395.2 1327.2 398.2 1314.2 398.2 1313.6 396.0 1311.7 390.5 1310.1 387.2 1308.3 378.8 1308.0 373.1 1307.5 369.7 1306.1 373.1 1302.1 373.7 1298.1 369.7 1298.1 368.2 1295.5 365.0 1292.8 362.1 1291.5 360.6 1286.1 360.6 1279.4 360.9 1275.4 360.6 1267.4 359.5 1264.2 355.3 1259.4 356.8 1254.3 355.0 1249.5 349.5 1246.1 346.5 1243.4 346.5 1242.1 348.3 1243.9 352.6 1247.4 357.1 1249.5 361.5 1250.6 358.3 1250.9 362.7 1252.2 364.5 1258.1 363.9 1261.6 360.6 1264.2 358.0 1265.0 363.0 1270.1 365.6 1273.6 368.8 1270.1 374.6 1268.0 378.8 1260.8 384.4 1256.7 385.3 1253.3 388.6 1243.4 392.7 1234.1 396.0 1230.0 396.3 1229.2 395.5 1228.2 387.2 1224.7 381.6 1218.3 371.7 1213.2 361.5 1207.4 352.6 1207.4 348.0 1205.2 353.5 1202.0 349.5 1200.7 346.8 1204.4 355.6 1208.7 364.5 1212.4 370.3 1213.2 377.1 1216.7 381.6 1219.4 388.3 1228.4 396.0 1229.5 398.2 1069.0 398.2 1069.0 396.0 1069.3 394.1 1067.2 390.8 1069.8 387.2 1071.2 381.6 1069.8 377.7 1069.3 373.7 1068.5 372.3 1071.4 365.3 1075.2 358.3 1079.5 352.9 1085.1 350.1 1088.3 345.2 1087.7 341.8 1089.3 339.3 1093.6 335.2 1095.7 333.9 1098.1 328.0 1099.5 327.7 1101.9 330.0 1105.9 329.6 1108.3 330.3 1112.3 328.3 1115.2 327.0 1121.9 324.7 1131.3 324.0 1135.3 324.4 1140.1 323.0 1143.3 324.0 1143.5 330.0 1140.9 334.2 1144.6 336.4 1149.1 337.4 1154.2 339.0 1158.2 342.7 1164.9 345.5 1167.3 339.9 1171.8 337.4 1172.6 337.7 1180.9 341.5 1186.0 341.8 1191.3 343.7 1193.7 342.7 1196.7 341.8 1200.1 342.4 1202.5 343.1 1205.7 341.8 1207.6 337.1 1209.8 332.3 1209.5 329.0 1210.6 325.4 1206.3 324.7 1201.5 327.0 1195.9 324.4 1192.7 326.7 1189.2 325.0 1186.8 324.0 1184.4 319.3 1183.6 315.5 1185.2 312.4 1191.1 310.3 1184.1 312.7 1183.3 310.6 1179.3 310.6 1176.6 313.8 1174.5 312.7 1175.3 316.2 1174.8 317.6 1177.2 321.0 1175.6 322.7 1174.0 326.0 1171.8 324.7 1170.5 321.7 1170.5 319.6 1167.6 315.5 1165.7 312.4 1166.0 307.4 1162.2 304.5 1157.7 301.3 1154.8 299.4 1152.3 294.5 1151.0 296.0 1150.5 293.0 1146.7 294.2 1146.7 297.9 1149.9 300.9 1151.8 305.3 1156.9 307.1 1162.0 311.7 1162.8 314.5 1159.3 312.0 1158.2 314.1 1159.6 317.6 1155.8 320.7 1156.9 317.6 1155.6 313.8 1151.8 311.0 1149.1 309.6 1144.1 305.3 1141.4 301.3 1137.7 297.9 1133.7 300.5 1130.5 302.7 1127.8 302.0 1123.2 302.0 1122.4 305.3 1119.8 308.9 1116.0 311.0 1113.1 315.5 1114.4 318.3 1111.5 322.0 1108.0 325.0 1102.2 325.0 Z" fill="#e7e7e7"/><path d="M1147.3 320.0 1155.6 320.0 1154.2 325.0 1147.3 322.4 Z" fill="#e7e7e7"/><path d="M1139.0 303.1 1138.5 308.9 1136.9 304.9 Z" fill="#e7e7e7"/><path d="M1206.0 328.7 1202.0 331.9 1200.1 330.3 1203.3 329.3 Z" fill="#e7e7e7"/><path d="M1176.9 328.7 1183.9 329.6 1180.7 331.0 1176.9 330.0 Z" fill="#e7e7e7"/><path d="M887.2 370.5 893.9 367.1 899.0 366.8 904.3 369.1 908.3 371.7 915.8 374.0 913.1 376.3 906.7 376.3 905.6 374.0 901.6 371.4 896.3 370.0 891.0 369.1 Z" fill="#e7e7e7"/><path d="M919.0 376.3 927.0 376.5 931.3 379.9 925.7 381.1 920.3 381.3 915.3 380.5 Z" fill="#e7e7e7"/><path d="M904.8 380.2 910.2 380.5 910.2 381.9 905.1 381.9 Z" fill="#e7e7e7"/><path d="M934.5 380.2 938.7 380.5 938.2 381.6 934.5 381.6 Z" fill="#e7e7e7"/><path d="M1191.3 311.7 1188.7 308.9 1188.7 304.5 1190.5 300.9 1193.2 296.8 1195.9 292.2 1200.7 293.8 1200.9 296.4 1204.1 300.2 1211.1 297.5 1207.4 293.4 1214.3 289.9 1218.6 289.5 1215.4 294.2 1212.7 296.8 1214.8 299.4 1220.2 303.5 1225.0 308.1 1224.7 310.6 1220.7 312.4 1215.4 312.0 1209.8 309.9 1207.4 308.9 1202.5 309.9 1197.7 311.7 Z" fill="#c9c9c9"/><path d="M1244.7 289.2 1251.4 288.0 1255.4 289.9 1256.7 295.7 1248.2 297.5 1251.4 303.1 1254.1 306.7 1255.4 310.3 1255.4 313.8 1257.3 317.3 1258.1 323.0 1252.7 325.0 1247.4 322.7 1244.5 319.3 1248.2 312.4 1243.7 307.4 1240.7 303.1 1238.6 297.5 1240.7 292.6 Z" fill="#c9c9c9"/><path d="M1271.4 289.9 1270.1 299.4 1274.1 301.3 1278.1 295.7 1276.8 289.9 Z" fill="#c9c9c9"/><path d="M1223.9 184.2 1222.0 192.9 1207.4 191.6 1202.0 188.3 1203.3 192.3 1206.8 203.2 1215.4 206.9 1222.0 203.2 1220.2 196.9 1227.4 190.3 1231.4 192.3 1232.7 179.9 1215.4 172.6 Z" fill="#c9c9c9"/><path d="M868.3 288.8 874.9 284.4 878.9 281.2 884.3 284.0 888.3 289.9 881.6 289.9 873.6 288.8 Z" fill="#c9c9c9"/><path d="M885.6 292.2 880.8 293.8 879.7 301.3 880.8 307.8 883.5 303.1 886.1 295.7 Z" fill="#c9c9c9"/><path d="M889.6 291.9 896.3 292.2 900.3 296.4 899.5 297.5 896.3 295.7 895.5 302.4 893.6 300.9 891.5 296.4 Z" fill="#c9c9c9"/><path d="M891.5 308.5 896.8 306.0 903.2 303.5 900.3 306.0 895.8 308.5 Z" fill="#c9c9c9"/><path d="M901.1 302.0 910.2 299.8 908.8 301.6 903.0 302.4 Z" fill="#c9c9c9"/><path d="M855.4 273.8 854.1 267.4 850.1 259.4 848.8 261.7 852.2 268.3 853.6 273.8 Z" fill="#c9c9c9"/><path d="M833.6 280.0 859.7 280.0 865.6 282.0 874.9 284.0" fill="none" stroke="#f1f1f1" stroke-width="2" stroke-linejoin="round"/><path d="M910.2 298.7 914.5 295.7 923.0 295.7 924.6 294.5 927.0 289.2 929.7 286.4 932.3 287.2 932.9 292.6 934.2 294.9" fill="none" stroke="#f1f1f1" stroke-width="2" stroke-linejoin="round"/><path d="M833.6 348.6 840.2 347.1 843.2 347.1 846.4 352.0 849.3 357.4 854.5 358.9" fill="none" stroke="#f1f1f1" stroke-width="2" stroke-linejoin="round"/><path d="M878.1 380.2 876.0 382.2 870.9 382.2 872.5 386.9 869.1 387.2 868.0 389.4 867.7 391.1" fill="none" stroke="#f1f1f1" stroke-width="2" stroke-linejoin="round"/><path d="M876.0 382.2 875.7 387.5" fill="none" stroke="#f1f1f1" stroke-width="2" stroke-linejoin="round"/><path d="M878.4 388.0 875.2 391.6 873.3 393.3" fill="none" stroke="#f1f1f1" stroke-width="2" stroke-linejoin="round"/><path d="M891.8 390.0 885.6 392.7 880.3 395.5" fill="none" stroke="#f1f1f1" stroke-width="2" stroke-linejoin="round"/><path d="M833.6 229.0 860.8 229.0" fill="none" stroke="#f1f1f1" stroke-width="2" stroke-linejoin="round"/><path d="M841.6 229.0 842.9 280.0" fill="none" stroke="#f1f1f1" stroke-width="2" stroke-linejoin="round"/><path d="M859.7 263.9 859.7 280.0" fill="none" stroke="#f1f1f1" stroke-width="2" stroke-linejoin="round"/><path d="M859.7 263.9 876.3 244.9" fill="none" stroke="#f1f1f1" stroke-width="2" stroke-linejoin="round"/><path d="M901.6 269.6 901.6 286.8 902.4 291.1 911.5 294.2 914.5 295.7" fill="none" stroke="#f1f1f1" stroke-width="2" stroke-linejoin="round"/><path d="M943.0 267.4 961.4 267.4 961.2 270.0" fill="none" stroke="#f1f1f1" stroke-width="2" stroke-linejoin="round"/><path d="M943.0 267.4 933.9 253.9 941.4 226.9" fill="none" stroke="#f1f1f1" stroke-width="2" stroke-linejoin="round"/><path d="M929.1 284.0 929.7 286.4" fill="none" stroke="#f1f1f1" stroke-width="2" stroke-linejoin="round"/><path d="M1090.4 307.1 1096.3 306.7 1095.5 310.3 1093.9 314.8 1095.2 320.7 1094.1 323.4" fill="none" stroke="#f1f1f1" stroke-width="2" stroke-linejoin="round"/><path d="M1151.8 259.0 1152.9 265.2 1154.0 271.7 1158.0 274.6 1162.0 275.9 1164.6 278.4 1174.5 278.4 1178.0 273.8 1176.9 266.5 1175.3 257.2 1166.8 256.7" fill="none" stroke="#f1f1f1" stroke-width="2" stroke-linejoin="round"/><path d="M1146.5 274.6 1154.0 271.7" fill="none" stroke="#f1f1f1" stroke-width="2" stroke-linejoin="round"/><path d="M1154.0 280.8 1159.0 281.2 1164.6 278.4" fill="none" stroke="#f1f1f1" stroke-width="2" stroke-linejoin="round"/><path d="M1159.6 284.0 1164.1 284.8 1171.3 282.4 1173.2 282.4 1174.0 279.6" fill="none" stroke="#f1f1f1" stroke-width="2" stroke-linejoin="round"/><path d="M1156.6 289.5 1163.8 292.2 1168.1 291.5 1175.0 284.4 1173.2 282.4" fill="none" stroke="#f1f1f1" stroke-width="2" stroke-linejoin="round"/><path d="M1168.1 291.5 1171.3 296.8 1174.5 298.7 1179.3 300.5 1186.5 299.0 1190.0 300.5" fill="none" stroke="#f1f1f1" stroke-width="2" stroke-linejoin="round"/><path d="M1175.0 284.4 1184.7 284.0 1186.0 282.8 1189.2 289.9 1189.2 293.8 1193.2 294.5" fill="none" stroke="#f1f1f1" stroke-width="2" stroke-linejoin="round"/><path d="M1186.0 282.8 1188.7 282.4 1194.5 289.9" fill="none" stroke="#f1f1f1" stroke-width="2" stroke-linejoin="round"/><path d="M1175.0 309.2 1180.7 308.5 1184.4 307.8 1188.7 306.7" fill="none" stroke="#f1f1f1" stroke-width="2" stroke-linejoin="round"/><path d="M1184.4 307.8 1183.3 310.6" fill="none" stroke="#f1f1f1" stroke-width="2" stroke-linejoin="round"/><path d="M1150.5 289.9 1150.5 293.8" fill="none" stroke="#f1f1f1" stroke-width="2" stroke-linejoin="round"/><path d="M1157.4 289.9 1154.8 293.8 1152.3 294.2" fill="none" stroke="#f1f1f1" stroke-width="2" stroke-linejoin="round"/><path d="M1163.8 292.2 1164.6 295.7 1165.7 296.0 1165.4 301.3 1163.3 304.5" fill="none" stroke="#f1f1f1" stroke-width="2" stroke-linejoin="round"/><path d="M1165.7 296.0 1171.3 296.8" fill="none" stroke="#f1f1f1" stroke-width="2" stroke-linejoin="round"/><path d="M1156.6 294.9 1164.6 295.7" fill="none" stroke="#f1f1f1" stroke-width="2" stroke-linejoin="round"/><path d="M1174.5 298.7 1174.8 302.4 1173.7 305.6 1175.0 309.2 1169.2 309.9 1166.0 304.9 1165.4 301.3" fill="none" stroke="#f1f1f1" stroke-width="2" stroke-linejoin="round"/><path d="M1173.7 305.6 1168.9 306.0 1166.0 304.9" fill="none" stroke="#f1f1f1" stroke-width="2" stroke-linejoin="round"/><path d="M1167.3 314.8 1170.0 310.6 1175.0 309.2" fill="none" stroke="#f1f1f1" stroke-width="2" stroke-linejoin="round"/><path d="M1166.0 307.4 1166.0 304.9" fill="none" stroke="#f1f1f1" stroke-width="2" stroke-linejoin="round"/><path d="M1170.2 247.3 1180.7 247.8 1184.9 250.6" fill="none" stroke="#f1f1f1" stroke-width="2" stroke-linejoin="round"/><path d="M1178.8 239.9 1187.1 241.9" fill="none" stroke="#f1f1f1" stroke-width="2" stroke-linejoin="round"/><path d="M1188.7 232.2 1187.1 241.9 1189.2 249.2 1184.9 250.6 1182.3 257.2 1176.6 258.5 1175.3 257.2" fill="none" stroke="#f1f1f1" stroke-width="2" stroke-linejoin="round"/><path d="M1166.8 256.7 1174.8 256.7 1174.8 253.5 1170.8 252.5" fill="none" stroke="#f1f1f1" stroke-width="2" stroke-linejoin="round"/><path d="M1189.2 249.2 1196.4 253.9 1199.9 262.6 1198.3 266.1 1195.6 269.6 1178.0 269.1 1176.9 266.5" fill="none" stroke="#f1f1f1" stroke-width="2" stroke-linejoin="round"/><path d="M1198.3 266.1 1204.7 266.1 1209.0 274.6 1215.4 275.9 1220.7 279.6 1220.2 284.8 1215.9 287.6" fill="none" stroke="#f1f1f1" stroke-width="2" stroke-linejoin="round"/><path d="M1188.1 226.3 1197.5 215.1 1194.0 203.2 1192.7 190.3 1191.3 172.6" fill="none" stroke="#f1f1f1" stroke-width="2" stroke-linejoin="round"/><path d="M1178.5 194.9 1176.6 184.2 1172.6 176.3" fill="none" stroke="#f1f1f1" stroke-width="2" stroke-linejoin="round"/><path d="M1144.6 234.3 1147.3 223.6 1146.2 212.2 1151.0 206.2 1152.6 196.9 1158.0 184.2 1163.3 177.1" fill="none" stroke="#f1f1f1" stroke-width="2" stroke-linejoin="round"/><path d="M1224.7 308.5 1230.0 309.6 1233.2 314.8 1233.2 323.4 1227.1 323.7 1220.7 325.0 1215.4 324.7 1211.4 326.7 1210.0 327.7" fill="none" stroke="#f1f1f1" stroke-width="2" stroke-linejoin="round"/><path d="M1220.2 301.3 1227.4 302.4 1235.4 304.5 1238.3 307.4 1243.7 307.4" fill="none" stroke="#f1f1f1" stroke-width="2" stroke-linejoin="round"/><path d="M1230.0 309.6 1234.1 309.6 1238.1 309.9 1238.3 307.4" fill="none" stroke="#f1f1f1" stroke-width="2" stroke-linejoin="round"/><path d="M1234.1 309.6 1236.7 313.8 1238.1 317.3 1233.2 314.8" fill="none" stroke="#f1f1f1" stroke-width="2" stroke-linejoin="round"/><path d="M1233.2 314.8 1237.0 317.6 1241.8 315.2 1244.5 319.3" fill="none" stroke="#f1f1f1" stroke-width="2" stroke-linejoin="round"/><path d="M1258.1 323.0 1266.1 320.7 1272.2 322.7 1277.0 325.4 1277.3 328.7 1275.7 334.8 1278.6 342.4 1276.5 347.1 1282.6 355.0 1278.4 360.9" fill="none" stroke="#f1f1f1" stroke-width="2" stroke-linejoin="round"/><path d="M1233.2 323.7 1236.7 328.0 1235.4 332.3 1237.0 337.1 1241.5 340.9 1243.4 346.5" fill="none" stroke="#f1f1f1" stroke-width="2" stroke-linejoin="round"/><path d="M1227.1 323.7 1223.9 326.0 1223.4 332.6 1217.5 335.8 1218.6 339.3 1218.0 340.2 1212.7 341.8 1210.3 348.9 1207.4 348.0" fill="none" stroke="#f1f1f1" stroke-width="2" stroke-linejoin="round"/><path d="M1218.0 340.2 1226.0 343.1 1233.2 349.2 1238.1 349.2 1241.0 351.1 1243.1 351.1" fill="none" stroke="#f1f1f1" stroke-width="2" stroke-linejoin="round"/><path d="M1217.5 335.8 1212.2 339.3 1209.5 338.0" fill="none" stroke="#f1f1f1" stroke-width="2" stroke-linejoin="round"/><path d="M1209.0 336.1 1209.5 338.0 1208.7 341.8 1207.4 348.0" fill="none" stroke="#f1f1f1" stroke-width="2" stroke-linejoin="round"/><path d="M1205.2 342.4 1207.1 348.0" fill="none" stroke="#f1f1f1" stroke-width="2" stroke-linejoin="round"/><path d="M1210.0 331.9 1211.6 333.2 1209.5 336.1" fill="none" stroke="#f1f1f1" stroke-width="2" stroke-linejoin="round"/><path d="M1228.2 386.1 1231.4 383.3 1239.4 383.6 1252.7 378.8 1255.7 385.3" fill="none" stroke="#f1f1f1" stroke-width="2" stroke-linejoin="round"/><path d="M1252.7 378.8 1260.8 376.0 1261.3 368.2 1262.9 363.9 1264.5 361.8" fill="none" stroke="#f1f1f1" stroke-width="2" stroke-linejoin="round"/><path d="M1261.3 368.2 1254.3 368.5 1251.7 363.9" fill="none" stroke="#f1f1f1" stroke-width="2" stroke-linejoin="round"/><path d="M1108.3 330.3 1110.7 339.9 1106.2 340.2 1099.2 348.0 1090.7 349.5 1090.7 353.5" fill="none" stroke="#f1f1f1" stroke-width="2" stroke-linejoin="round"/><path d="M1078.7 353.5 1090.7 353.5 1090.7 358.6 1081.9 358.6 1081.9 365.9 1079.2 366.5 1079.2 372.3 1068.5 372.3" fill="none" stroke="#f1f1f1" stroke-width="2" stroke-linejoin="round"/><path d="M1090.7 354.7 1101.1 361.5 1117.1 373.1 1122.7 378.5 1129.4 377.4 1145.9 365.9" fill="none" stroke="#f1f1f1" stroke-width="2" stroke-linejoin="round"/><path d="M1101.1 361.5 1096.5 361.5 1098.9 385.8 1099.2 388.6 1088.8 388.9 1084.8 389.7 1081.3 390.5 1076.5 385.5 1069.8 387.2" fill="none" stroke="#f1f1f1" stroke-width="2" stroke-linejoin="round"/><path d="M1136.9 324.4 1135.8 332.3 1134.5 336.4 1137.9 340.2 1139.3 345.9" fill="none" stroke="#f1f1f1" stroke-width="2" stroke-linejoin="round"/><path d="M1144.6 336.4 1142.2 340.2 1139.3 345.9 1140.3 357.1 1141.1 363.6 1145.9 365.9 1151.8 368.5 1154.0 367.4 1178.0 377.4 1178.0 376.0 1180.7 376.0 1180.7 370.3" fill="none" stroke="#f1f1f1" stroke-width="2" stroke-linejoin="round"/><path d="M1180.9 341.5 1180.7 348.9 1180.7 370.3 1212.4 370.3" fill="none" stroke="#f1f1f1" stroke-width="2" stroke-linejoin="round"/><path d="M1178.0 377.4 1178.0 388.0 1175.0 388.6 1172.6 396.6 1174.0 398.2" fill="none" stroke="#f1f1f1" stroke-width="2" stroke-linejoin="round"/><path d="M1154.0 367.4 1155.6 373.1 1155.3 384.7 1149.9 391.6 1149.7 393.8 1151.3 395.5 1152.9 398.2" fill="none" stroke="#f1f1f1" stroke-width="2" stroke-linejoin="round"/><path d="M1149.7 393.8 1140.6 394.7 1132.6 393.3 1125.9 393.3 1123.5 399.0" fill="none" stroke="#f1f1f1" stroke-width="2" stroke-linejoin="round"/><path d="M1122.7 378.5 1123.2 389.2 1116.6 388.9 1114.4 390.3 1108.6 390.0 1103.2 394.7 1100.0 398.2" fill="none" stroke="#f1f1f1" stroke-width="2" stroke-linejoin="round"/><path d="M1114.4 390.3 1116.6 394.7 1121.4 397.1 1123.5 399.0" fill="none" stroke="#f1f1f1" stroke-width="2" stroke-linejoin="round"/><path d="M1081.3 390.5 1083.5 397.1 1077.3 397.1 1072.5 396.3 1069.3 397.1" fill="none" stroke="#f1f1f1" stroke-width="2" stroke-linejoin="round"/><path d="M1069.6 393.8 1076.5 393.3 1076.5 394.7 1069.3 395.2" fill="none" stroke="#f1f1f1" stroke-width="2" stroke-linejoin="round"/><path d="M1216.7 381.6 1212.7 384.4 1211.1 389.7 1211.4 391.9 1210.0 396.3 1208.7 398.2" fill="none" stroke="#f1f1f1" stroke-width="2" stroke-linejoin="round"/><path d="M1211.4 391.9 1215.4 390.3 1220.7 391.4 1227.1 396.0 1227.1 396.9 1225.5 400.9" fill="none" stroke="#f1f1f1" stroke-width="2" stroke-linejoin="round"/><path d="M1244.7 289.2 1238.1 282.4 1240.7 273.8 1249.5 268.7 1262.6 272.5 1272.8 271.7 1277.3 260.8 1287.5 257.2 1298.1 252.1 1304.8 258.5 1309.9 260.8 1318.2 258.5 1327.2 271.7 1336.6 272.5 1347.0 279.2 1342.2 287.2 1335.5 288.0 1334.4 294.9 1327.5 296.0 1328.0 303.8 1316.3 303.5 1304.0 303.8 1298.1 309.2 1292.0 310.3 1287.2 300.9 1270.4 293.4 1263.4 295.7 1263.4 309.2 1254.1 306.7" fill="none" stroke="#f1f1f1" stroke-width="2" stroke-linejoin="round"/><path d="M1263.4 309.2 1274.1 306.0 1279.2 309.6 1284.8 317.3 1291.5 322.7" fill="none" stroke="#f1f1f1" stroke-width="2" stroke-linejoin="round"/><path d="M1277.3 328.7 1291.5 322.7 1294.9 323.4 1304.8 322.0 1313.3 323.4" fill="none" stroke="#f1f1f1" stroke-width="2" stroke-linejoin="round"/><path d="M1328.0 303.8 1313.6 312.7 1310.7 315.9 1313.3 323.4" fill="none" stroke="#f1f1f1" stroke-width="2" stroke-linejoin="round"/><path d="M1304.0 303.8 1302.9 305.6 1304.8 309.6 1302.9 313.1 1310.9 315.5" fill="none" stroke="#f1f1f1" stroke-width="2" stroke-linejoin="round"/><path d="M1292.0 310.3 1295.5 313.1 1302.1 310.3 1302.9 313.1 1298.9 315.9 1296.0 320.0 1294.9 323.4" fill="none" stroke="#f1f1f1" stroke-width="2" stroke-linejoin="round"/><path d="M1313.3 323.4 1304.8 326.7 1303.5 333.9 1299.5 336.8 1298.9 340.9 1292.3 341.5 1290.9 346.8 1285.0 348.3 1276.5 347.1" fill="none" stroke="#f1f1f1" stroke-width="2" stroke-linejoin="round"/><path d="M1313.3 323.4 1321.9 329.0 1315.5 337.7 1313.1 342.7 1309.9 346.5 1302.4 352.9 1301.6 359.5 1303.5 363.6 1296.0 365.3" fill="none" stroke="#f1f1f1" stroke-width="2" stroke-linejoin="round"/><path d="M1321.9 329.0 1325.6 338.0 1330.7 345.5 1342.2 351.7 1351.0 352.9 1356.9 351.7 1359.5 353.2 1368.4 348.6 1373.7 352.3" fill="none" stroke="#f1f1f1" stroke-width="2" stroke-linejoin="round"/><path d="M1330.7 345.5 1327.8 350.1 1338.7 354.4 1348.3 357.4 1351.0 352.9" fill="none" stroke="#f1f1f1" stroke-width="2" stroke-linejoin="round"/><path d="M1359.5 353.2 1359.5 356.2 1351.5 356.5 1351.0 352.9" fill="none" stroke="#f1f1f1" stroke-width="2" stroke-linejoin="round"/><path d="M1349.9 357.4 1353.7 360.6 1360.6 360.9 1360.1 363.9 1357.4 367.4 1360.1 371.7" fill="none" stroke="#f1f1f1" stroke-width="2" stroke-linejoin="round"/><path d="M1349.9 357.4 1350.7 363.6 1351.8 370.8" fill="none" stroke="#f1f1f1" stroke-width="2" stroke-linejoin="round"/><path d="M1373.7 352.3 1370.2 355.3 1366.7 362.4 1362.7 370.3 1360.1 371.7" fill="none" stroke="#f1f1f1" stroke-width="2" stroke-linejoin="round"/><path d="M1373.7 352.3 1376.6 361.5 1374.5 364.5 1379.0 367.1 1383.8 372.3 1381.2 375.1 1375.6 376.8 1374.8 382.2 1376.1 389.2 1378.2 392.2 1378.8 398.2" fill="none" stroke="#f1f1f1" stroke-width="2" stroke-linejoin="round"/><path d="M1381.2 375.1 1384.1 377.4 1383.8 383.0 1389.7 380.8 1392.9 382.2" fill="none" stroke="#f1f1f1" stroke-width="2" stroke-linejoin="round"/><path d="M1383.8 372.3 1386.8 369.1 1394.2 368.8" fill="none" stroke="#f1f1f1" stroke-width="2" stroke-linejoin="round"/><path d="M1347.0 279.2 1356.6 288.8 1363.5 295.7 1371.3 304.2 1383.6 304.5 1395.6 308.1" fill="none" stroke="#f1f1f1" stroke-width="2" stroke-linejoin="round"/><path d="M1347.0 279.2 1359.5 273.8 1365.7 273.0 1375.8 276.3 1377.7 267.4 1386.8 270.4 1394.2 274.6" fill="none" stroke="#f1f1f1" stroke-width="2" stroke-linejoin="round"/><path d="M833.6 280.0 859.7 280.0 865.6 282.0 874.9 284.0" fill="none" stroke="#c4c4c4" stroke-width="0.8" stroke-linejoin="round"/><path d="M910.2 298.7 914.5 295.7 923.0 295.7 924.6 294.5 927.0 289.2 929.7 286.4 932.3 287.2 932.9 292.6 934.2 294.9" fill="none" stroke="#c4c4c4" stroke-width="0.8" stroke-linejoin="round"/><path d="M833.6 348.6 840.2 347.1 843.2 347.1 846.4 352.0 849.3 357.4 854.5 358.9" fill="none" stroke="#c4c4c4" stroke-width="0.8" stroke-linejoin="round"/><path d="M878.1 380.2 876.0 382.2 870.9 382.2 872.5 386.9 869.1 387.2 868.0 389.4 867.7 391.1" fill="none" stroke="#c4c4c4" stroke-width="0.8" stroke-linejoin="round"/><path d="M876.0 382.2 875.7 387.5" fill="none" stroke="#c4c4c4" stroke-width="0.8" stroke-linejoin="round"/><path d="M878.4 388.0 875.2 391.6 873.3 393.3" fill="none" stroke="#c4c4c4" stroke-width="0.8" stroke-linejoin="round"/><path d="M891.8 390.0 885.6 392.7 880.3 395.5" fill="none" stroke="#c4c4c4" stroke-width="0.8" stroke-linejoin="round"/><path d="M833.6 229.0 860.8 229.0" fill="none" stroke="#c4c4c4" stroke-width="0.8" stroke-linejoin="round"/><path d="M841.6 229.0 842.9 280.0" fill="none" stroke="#c4c4c4" stroke-width="0.8" stroke-linejoin="round"/><path d="M859.7 263.9 859.7 280.0" fill="none" stroke="#c4c4c4" stroke-width="0.8" stroke-linejoin="round"/><path d="M859.7 263.9 876.3 244.9" fill="none" stroke="#c4c4c4" stroke-width="0.8" stroke-linejoin="round"/><path d="M901.6 269.6 901.6 286.8 902.4 291.1 911.5 294.2 914.5 295.7" fill="none" stroke="#c4c4c4" stroke-width="0.8" stroke-linejoin="round"/><path d="M943.0 267.4 961.4 267.4 961.2 270.0" fill="none" stroke="#c4c4c4" stroke-width="0.8" stroke-linejoin="round"/><path d="M943.0 267.4 933.9 253.9 941.4 226.9" fill="none" stroke="#c4c4c4" stroke-width="0.8" stroke-linejoin="round"/><path d="M929.1 284.0 929.7 286.4" fill="none" stroke="#c4c4c4" stroke-width="0.8" stroke-linejoin="round"/><path d="M1090.4 307.1 1096.3 306.7 1095.5 310.3 1093.9 314.8 1095.2 320.7 1094.1 323.4" fill="none" stroke="#c4c4c4" stroke-width="0.8" stroke-linejoin="round"/><path d="M1151.8 259.0 1152.9 265.2 1154.0 271.7 1158.0 274.6 1162.0 275.9 1164.6 278.4 1174.5 278.4 1178.0 273.8 1176.9 266.5 1175.3 257.2 1166.8 256.7" fill="none" stroke="#c4c4c4" stroke-width="0.8" stroke-linejoin="round"/><path d="M1146.5 274.6 1154.0 271.7" fill="none" stroke="#c4c4c4" stroke-width="0.8" stroke-linejoin="round"/><path d="M1154.0 280.8 1159.0 281.2 1164.6 278.4" fill="none" stroke="#c4c4c4" stroke-width="0.8" stroke-linejoin="round"/><path d="M1159.6 284.0 1164.1 284.8 1171.3 282.4 1173.2 282.4 1174.0 279.6" fill="none" stroke="#c4c4c4" stroke-width="0.8" stroke-linejoin="round"/><path d="M1156.6 289.5 1163.8 292.2 1168.1 291.5 1175.0 284.4 1173.2 282.4" fill="none" stroke="#c4c4c4" stroke-width="0.8" stroke-linejoin="round"/><path d="M1168.1 291.5 1171.3 296.8 1174.5 298.7 1179.3 300.5 1186.5 299.0 1190.0 300.5" fill="none" stroke="#c4c4c4" stroke-width="0.8" stroke-linejoin="round"/><path d="M1175.0 284.4 1184.7 284.0 1186.0 282.8 1189.2 289.9 1189.2 293.8 1193.2 294.5" fill="none" stroke="#c4c4c4" stroke-width="0.8" stroke-linejoin="round"/><path d="M1186.0 282.8 1188.7 282.4 1194.5 289.9" fill="none" stroke="#c4c4c4" stroke-width="0.8" stroke-linejoin="round"/><path d="M1175.0 309.2 1180.7 308.5 1184.4 307.8 1188.7 306.7" fill="none" stroke="#c4c4c4" stroke-width="0.8" stroke-linejoin="round"/><path d="M1184.4 307.8 1183.3 310.6" fill="none" stroke="#c4c4c4" stroke-width="0.8" stroke-linejoin="round"/><path d="M1150.5 289.9 1150.5 293.8" fill="none" stroke="#c4c4c4" stroke-width="0.8" stroke-linejoin="round"/><path d="M1157.4 289.9 1154.8 293.8 1152.3 294.2" fill="none" stroke="#c4c4c4" stroke-width="0.8" stroke-linejoin="round"/><path d="M1163.8 292.2 1164.6 295.7 1165.7 296.0 1165.4 301.3 1163.3 304.5" fill="none" stroke="#c4c4c4" stroke-width="0.8" stroke-linejoin="round"/><path d="M1165.7 296.0 1171.3 296.8" fill="none" stroke="#c4c4c4" stroke-width="0.8" stroke-linejoin="round"/><path d="M1156.6 294.9 1164.6 295.7" fill="none" stroke="#c4c4c4" stroke-width="0.8" stroke-linejoin="round"/><path d="M1174.5 298.7 1174.8 302.4 1173.7 305.6 1175.0 309.2 1169.2 309.9 1166.0 304.9 1165.4 301.3" fill="none" stroke="#c4c4c4" stroke-width="0.8" stroke-linejoin="round"/><path d="M1173.7 305.6 1168.9 306.0 1166.0 304.9" fill="none" stroke="#c4c4c4" stroke-width="0.8" stroke-linejoin="round"/><path d="M1167.3 314.8 1170.0 310.6 1175.0 309.2" fill="none" stroke="#c4c4c4" stroke-width="0.8" stroke-linejoin="round"/><path d="M1166.0 307.4 1166.0 304.9" fill="none" stroke="#c4c4c4" stroke-width="0.8" stroke-linejoin="round"/><path d="M1170.2 247.3 1180.7 247.8 1184.9 250.6" fill="none" stroke="#c4c4c4" stroke-width="0.8" stroke-linejoin="round"/><path d="M1178.8 239.9 1187.1 241.9" fill="none" stroke="#c4c4c4" stroke-width="0.8" stroke-linejoin="round"/><path d="M1188.7 232.2 1187.1 241.9 1189.2 249.2 1184.9 250.6 1182.3 257.2 1176.6 258.5 1175.3 257.2" fill="none" stroke="#c4c4c4" stroke-width="0.8" stroke-linejoin="round"/><path d="M1166.8 256.7 1174.8 256.7 1174.8 253.5 1170.8 252.5" fill="none" stroke="#c4c4c4" stroke-width="0.8" stroke-linejoin="round"/><path d="M1189.2 249.2 1196.4 253.9 1199.9 262.6 1198.3 266.1 1195.6 269.6 1178.0 269.1 1176.9 266.5" fill="none" stroke="#c4c4c4" stroke-width="0.8" stroke-linejoin="round"/><path d="M1198.3 266.1 1204.7 266.1 1209.0 274.6 1215.4 275.9 1220.7 279.6 1220.2 284.8 1215.9 287.6" fill="none" stroke="#c4c4c4" stroke-width="0.8" stroke-linejoin="round"/><path d="M1188.1 226.3 1197.5 215.1 1194.0 203.2 1192.7 190.3 1191.3 172.6" fill="none" stroke="#c4c4c4" stroke-width="0.8" stroke-linejoin="round"/><path d="M1178.5 194.9 1176.6 184.2 1172.6 176.3" fill="none" stroke="#c4c4c4" stroke-width="0.8" stroke-linejoin="round"/><path d="M1144.6 234.3 1147.3 223.6 1146.2 212.2 1151.0 206.2 1152.6 196.9 1158.0 184.2 1163.3 177.1" fill="none" stroke="#c4c4c4" stroke-width="0.8" stroke-linejoin="round"/><path d="M1224.7 308.5 1230.0 309.6 1233.2 314.8 1233.2 323.4 1227.1 323.7 1220.7 325.0 1215.4 324.7 1211.4 326.7 1210.0 327.7" fill="none" stroke="#c4c4c4" stroke-width="0.8" stroke-linejoin="round"/><path d="M1220.2 301.3 1227.4 302.4 1235.4 304.5 1238.3 307.4 1243.7 307.4" fill="none" stroke="#c4c4c4" stroke-width="0.8" stroke-linejoin="round"/><path d="M1230.0 309.6 1234.1 309.6 1238.1 309.9 1238.3 307.4" fill="none" stroke="#c4c4c4" stroke-width="0.8" stroke-linejoin="round"/><path d="M1234.1 309.6 1236.7 313.8 1238.1 317.3 1233.2 314.8" fill="none" stroke="#c4c4c4" stroke-width="0.8" stroke-linejoin="round"/><path d="M1233.2 314.8 1237.0 317.6 1241.8 315.2 1244.5 319.3" fill="none" stroke="#c4c4c4" stroke-width="0.8" stroke-linejoin="round"/><path d="M1258.1 323.0 1266.1 320.7 1272.2 322.7 1277.0 325.4 1277.3 328.7 1275.7 334.8 1278.6 342.4 1276.5 347.1 1282.6 355.0 1278.4 360.9" fill="none" stroke="#c4c4c4" stroke-width="0.8" stroke-linejoin="round"/><path d="M1233.2 323.7 1236.7 328.0 1235.4 332.3 1237.0 337.1 1241.5 340.9 1243.4 346.5" fill="none" stroke="#c4c4c4" stroke-width="0.8" stroke-linejoin="round"/><path d="M1227.1 323.7 1223.9 326.0 1223.4 332.6 1217.5 335.8 1218.6 339.3 1218.0 340.2 1212.7 341.8 1210.3 348.9 1207.4 348.0" fill="none" stroke="#c4c4c4" stroke-width="0.8" stroke-linejoin="round"/><path d="M1218.0 340.2 1226.0 343.1 1233.2 349.2 1238.1 349.2 1241.0 351.1 1243.1 351.1" fill="none" stroke="#c4c4c4" stroke-width="0.8" stroke-linejoin="round"/><path d="M1217.5 335.8 1212.2 339.3 1209.5 338.0" fill="none" stroke="#c4c4c4" stroke-width="0.8" stroke-linejoin="round"/><path d="M1209.0 336.1 1209.5 338.0 1208.7 341.8 1207.4 348.0" fill="none" stroke="#c4c4c4" stroke-width="0.8" stroke-linejoin="round"/><path d="M1205.2 342.4 1207.1 348.0" fill="none" stroke="#c4c4c4" stroke-width="0.8" stroke-linejoin="round"/><path d="M1210.0 331.9 1211.6 333.2 1209.5 336.1" fill="none" stroke="#c4c4c4" stroke-width="0.8" stroke-linejoin="round"/><path d="M1228.2 386.1 1231.4 383.3 1239.4 383.6 1252.7 378.8 1255.7 385.3" fill="none" stroke="#c4c4c4" stroke-width="0.8" stroke-linejoin="round"/><path d="M1252.7 378.8 1260.8 376.0 1261.3 368.2 1262.9 363.9 1264.5 361.8" fill="none" stroke="#c4c4c4" stroke-width="0.8" stroke-linejoin="round"/><path d="M1261.3 368.2 1254.3 368.5 1251.7 363.9" fill="none" stroke="#c4c4c4" stroke-width="0.8" stroke-linejoin="round"/><path d="M1108.3 330.3 1110.7 339.9 1106.2 340.2 1099.2 348.0 1090.7 349.5 1090.7 353.5" fill="none" stroke="#c4c4c4" stroke-width="0.8" stroke-linejoin="round"/><path d="M1078.7 353.5 1090.7 353.5 1090.7 358.6 1081.9 358.6 1081.9 365.9 1079.2 366.5 1079.2 372.3 1068.5 372.3" fill="none" stroke="#c4c4c4" stroke-width="0.8" stroke-linejoin="round"/><path d="M1090.7 354.7 1101.1 361.5 1117.1 373.1 1122.7 378.5 1129.4 377.4 1145.9 365.9" fill="none" stroke="#c4c4c4" stroke-width="0.8" stroke-linejoin="round"/><path d="M1101.1 361.5 1096.5 361.5 1098.9 385.8 1099.2 388.6 1088.8 388.9 1084.8 389.7 1081.3 390.5 1076.5 385.5 1069.8 387.2" fill="none" stroke="#c4c4c4" stroke-width="0.8" stroke-linejoin="round"/><path d="M1136.9 324.4 1135.8 332.3 1134.5 336.4 1137.9 340.2 1139.3 345.9" fill="none" stroke="#c4c4c4" stroke-width="0.8" stroke-linejoin="round"/><path d="M1144.6 336.4 1142.2 340.2 1139.3 345.9 1140.3 357.1 1141.1 363.6 1145.9 365.9 1151.8 368.5 1154.0 367.4 1178.0 377.4 1178.0 376.0 1180.7 376.0 1180.7 370.3" fill="none" stroke="#c4c4c4" stroke-width="0.8" stroke-linejoin="round"/><path d="M1180.9 341.5 1180.7 348.9 1180.7 370.3 1212.4 370.3" fill="none" stroke="#c4c4c4" stroke-width="0.8" stroke-linejoin="round"/><path d="M1178.0 377.4 1178.0 388.0 1175.0 388.6 1172.6 396.6 1174.0 398.2" fill="none" stroke="#c4c4c4" stroke-width="0.8" stroke-linejoin="round"/><path d="M1154.0 367.4 1155.6 373.1 1155.3 384.7 1149.9 391.6 1149.7 393.8 1151.3 395.5 1152.9 398.2" fill="none" stroke="#c4c4c4" stroke-width="0.8" stroke-linejoin="round"/><path d="M1149.7 393.8 1140.6 394.7 1132.6 393.3 1125.9 393.3 1123.5 399.0" fill="none" stroke="#c4c4c4" stroke-width="0.8" stroke-linejoin="round"/><path d="M1122.7 378.5 1123.2 389.2 1116.6 388.9 1114.4 390.3 1108.6 390.0 1103.2 394.7 1100.0 398.2" fill="none" stroke="#c4c4c4" stroke-width="0.8" stroke-linejoin="round"/><path d="M1114.4 390.3 1116.6 394.7 1121.4 397.1 1123.5 399.0" fill="none" stroke="#c4c4c4" stroke-width="0.8" stroke-linejoin="round"/><path d="M1081.3 390.5 1083.5 397.1 1077.3 397.1 1072.5 396.3 1069.3 397.1" fill="none" stroke="#c4c4c4" stroke-width="0.8" stroke-linejoin="round"/><path d="M1069.6 393.8 1076.5 393.3 1076.5 394.7 1069.3 395.2" fill="none" stroke="#c4c4c4" stroke-width="0.8" stroke-linejoin="round"/><path d="M1216.7 381.6 1212.7 384.4 1211.1 389.7 1211.4 391.9 1210.0 396.3 1208.7 398.2" fill="none" stroke="#c4c4c4" stroke-width="0.8" stroke-linejoin="round"/><path d="M1211.4 391.9 1215.4 390.3 1220.7 391.4 1227.1 396.0 1227.1 396.9 1225.5 400.9" fill="none" stroke="#c4c4c4" stroke-width="0.8" stroke-linejoin="round"/><path d="M1244.7 289.2 1238.1 282.4 1240.7 273.8 1249.5 268.7 1262.6 272.5 1272.8 271.7 1277.3 260.8 1287.5 257.2 1298.1 252.1 1304.8 258.5 1309.9 260.8 1318.2 258.5 1327.2 271.7 1336.6 272.5 1347.0 279.2 1342.2 287.2 1335.5 288.0 1334.4 294.9 1327.5 296.0 1328.0 303.8 1316.3 303.5 1304.0 303.8 1298.1 309.2 1292.0 310.3 1287.2 300.9 1270.4 293.4 1263.4 295.7 1263.4 309.2 1254.1 306.7" fill="none" stroke="#c4c4c4" stroke-width="0.8" stroke-linejoin="round"/><path d="M1263.4 309.2 1274.1 306.0 1279.2 309.6 1284.8 317.3 1291.5 322.7" fill="none" stroke="#c4c4c4" stroke-width="0.8" stroke-linejoin="round"/><path d="M1277.3 328.7 1291.5 322.7 1294.9 323.4 1304.8 322.0 1313.3 323.4" fill="none" stroke="#c4c4c4" stroke-width="0.8" stroke-linejoin="round"/><path d="M1328.0 303.8 1313.6 312.7 1310.7 315.9 1313.3 323.4" fill="none" stroke="#c4c4c4" stroke-width="0.8" stroke-linejoin="round"/><path d="M1304.0 303.8 1302.9 305.6 1304.8 309.6 1302.9 313.1 1310.9 315.5" fill="none" stroke="#c4c4c4" stroke-width="0.8" stroke-linejoin="round"/><path d="M1292.0 310.3 1295.5 313.1 1302.1 310.3 1302.9 313.1 1298.9 315.9 1296.0 320.0 1294.9 323.4" fill="none" stroke="#c4c4c4" stroke-width="0.8" stroke-linejoin="round"/><path d="M1313.3 323.4 1304.8 326.7 1303.5 333.9 1299.5 336.8 1298.9 340.9 1292.3 341.5 1290.9 346.8 1285.0 348.3 1276.5 347.1" fill="none" stroke="#c4c4c4" stroke-width="0.8" stroke-linejoin="round"/><path d="M1313.3 323.4 1321.9 329.0 1315.5 337.7 1313.1 342.7 1309.9 346.5 1302.4 352.9 1301.6 359.5 1303.5 363.6 1296.0 365.3" fill="none" stroke="#c4c4c4" stroke-width="0.8" stroke-linejoin="round"/><path d="M1321.9 329.0 1325.6 338.0 1330.7 345.5 1342.2 351.7 1351.0 352.9 1356.9 351.7 1359.5 353.2 1368.4 348.6 1373.7 352.3" fill="none" stroke="#c4c4c4" stroke-width="0.8" stroke-linejoin="round"/><path d="M1330.7 345.5 1327.8 350.1 1338.7 354.4 1348.3 357.4 1351.0 352.9" fill="none" stroke="#c4c4c4" stroke-width="0.8" stroke-linejoin="round"/><path d="M1359.5 353.2 1359.5 356.2 1351.5 356.5 1351.0 352.9" fill="none" stroke="#c4c4c4" stroke-width="0.8" stroke-linejoin="round"/><path d="M1349.9 357.4 1353.7 360.6 1360.6 360.9 1360.1 363.9 1357.4 367.4 1360.1 371.7" fill="none" stroke="#c4c4c4" stroke-width="0.8" stroke-linejoin="round"/><path d="M1349.9 357.4 1350.7 363.6 1351.8 370.8" fill="none" stroke="#c4c4c4" stroke-width="0.8" stroke-linejoin="round"/><path d="M1373.7 352.3 1370.2 355.3 1366.7 362.4 1362.7 370.3 1360.1 371.7" fill="none" stroke="#c4c4c4" stroke-width="0.8" stroke-linejoin="round"/><path d="M1373.7 352.3 1376.6 361.5 1374.5 364.5 1379.0 367.1 1383.8 372.3 1381.2 375.1 1375.6 376.8 1374.8 382.2 1376.1 389.2 1378.2 392.2 1378.8 398.2" fill="none" stroke="#c4c4c4" stroke-width="0.8" stroke-linejoin="round"/><path d="M1381.2 375.1 1384.1 377.4 1383.8 383.0 1389.7 380.8 1392.9 382.2" fill="none" stroke="#c4c4c4" stroke-width="0.8" stroke-linejoin="round"/><path d="M1383.8 372.3 1386.8 369.1 1394.2 368.8" fill="none" stroke="#c4c4c4" stroke-width="0.8" stroke-linejoin="round"/><path d="M1347.0 279.2 1356.6 288.8 1363.5 295.7 1371.3 304.2 1383.6 304.5 1395.6 308.1" fill="none" stroke="#c4c4c4" stroke-width="0.8" stroke-linejoin="round"/><path d="M1347.0 279.2 1359.5 273.8 1365.7 273.0 1375.8 276.3 1377.7 267.4 1386.8 270.4 1394.2 274.6" fill="none" stroke="#c4c4c4" stroke-width="0.8" stroke-linejoin="round"/><path d="M1090.4 307.1 1096.3 306.7 1095.5 310.3 1093.9 314.8 1095.2 320.7 1094.1 323.4 1090.1 324.0 1088.8 318.3 1090.7 310.3 Z" fill="#f1f1f1"/><path d="M809.5 217.4 817.5 219.8 814.3 224.2 805.5 222.8 Z" fill="#c9c9c9"/><path d="M841.6 237.4 844.8 240.6 843.5 246.3 840.0 244.6 Z" fill="#c9c9c9"/><path d="M822.9 233.3 826.9 234.7 825.3 237.4 820.9 236.6 Z" fill="#c9c9c9"/><path d="M852.2 249.2 854.4 250.9 853.5 253.9 851.2 253.0 Z" fill="#c9c9c9"/><path d="M846.9 256.2 848.5 257.8 847.9 260.8 846.1 259.9 Z" fill="#c9c9c9"/><path d="M913.7 261.2 915.3 262.5 914.6 264.8 912.8 264.1 Z" fill="#c9c9c9"/><path d="M927.0 253.9 928.6 255.5 928.0 258.5 926.2 257.6 Z" fill="#c9c9c9"/><path d="M916.3 247.8 917.7 248.8 917.1 250.6 915.7 250.1 Z" fill="#c9c9c9"/><path d="M877.6 271.7 879.5 273.2 878.7 275.9 876.7 275.1 Z" fill="#c9c9c9"/><path d="M861.6 276.3 863.2 277.5 862.5 279.6 860.8 278.9 Z" fill="#c9c9c9"/><path d="M943.0 259.4 945.4 260.4 944.5 262.1 941.8 261.6 Z" fill="#c9c9c9"/><path d="M927.0 270.0 928.3 271.2 927.8 273.4 926.3 272.7 Z" fill="#c9c9c9"/><path d="M921.7 280.0 923.0 280.9 922.5 282.4 921.0 281.9 Z" fill="#c9c9c9"/><path d="M1196.7 219.7 1200.4 222.4 1198.9 227.4 1194.8 225.9 Z" fill="#c9c9c9"/><path d="M1208.7 215.7 1211.4 218.1 1210.3 222.5 1207.4 221.2 Z" fill="#c9c9c9"/><path d="M1187.3 233.8 1188.4 235.6 1188.0 238.9 1186.8 237.9 Z" fill="#c9c9c9"/><path d="M1151.3 232.2 1152.9 234.0 1152.2 237.4 1150.5 236.4 Z" fill="#c9c9c9"/><path d="M1152.6 234.8 1153.4 236.6 1153.1 239.9 1152.2 238.9 Z" fill="#c9c9c9"/><path d="M1314.2 289.5 1319.5 290.4 1317.4 291.9 1311.5 291.4 Z" fill="#c9c9c9"/><path d="M1207.4 294.9 1208.7 295.4 1208.2 296.4 1206.7 296.1 Z" fill="#c9c9c9"/><path d="M1069.8 351.1 1071.2 351.5 1070.6 352.3 1069.2 352.0 Z" fill="#f9b955"/><path d="M1072.5 351.7 1073.9 352.1 1073.3 352.9 1071.8 352.6 Z" fill="#f9b955"/><path d="M1076.5 350.1 1077.9 350.6 1077.3 351.4 1075.9 351.1 Z" fill="#f9b955"/><path d="M1077.6 348.9 1078.9 349.4 1078.4 350.1 1076.9 349.9 Z" fill="#f9b955"/><path d="M1066.4 349.8 1067.7 350.3 1067.2 351.1 1065.7 350.8 Z" fill="#f9b955"/><path d="M1098.7 275.9 1104.6 273.0 1108.6 273.4 1114.7 272.5 1117.6 271.3 1115.8 269.6 1118.2 267.4 1118.2 263.5 1114.7 263.0 1113.9 259.9 1112.3 256.2 1109.6 251.1 1105.9 249.2 1106.7 246.8 1108.6 240.9 1103.2 241.4 1105.9 236.4 1100.6 236.4 1098.4 240.4 1097.3 245.8 1098.7 252.5 1100.6 253.9 1104.6 254.4 1105.9 258.5 1105.9 261.7 1101.6 261.7 1101.4 263.9 1101.4 267.0 1099.7 267.8 1103.5 269.1 1105.9 270.0 1102.7 270.8 1100.6 273.8 Z" fill="#e08878"/><path d="M1097.9 253.0 1099.2 255.8 1097.3 258.1 1092.5 256.7 1094.4 253.9 Z" fill="#e08878"/><path d="M1087.7 270.0 1086.1 266.5 1087.2 261.7 1087.2 257.2 1094.1 252.5 1094.4 253.9 1092.5 256.7 1097.3 258.1 1097.6 261.7 1096.8 266.5 1091.7 268.3 Z" fill="#cc55a5"/><path d="M1092.8 300.5 1099.2 301.3 1103.8 301.6 1109.1 301.6 1115.8 304.2 1122.4 305.3 1119.8 308.9 1116.0 311.0 1113.1 315.5 1114.4 318.3 1111.5 322.0 1108.0 325.0 1102.2 325.0 1098.9 327.3 1097.3 326.7 1094.1 323.4 1095.2 320.7 1093.9 314.8 1095.5 310.3 1096.3 306.7 1090.4 307.1 1089.3 303.1 Z" fill="#f9b955"/><path d="M1109.1 301.6 1110.7 297.2 1110.7 291.9 1108.0 287.2 1102.4 284.8 1101.1 282.4 1104.6 281.2 1109.9 281.6 1108.8 277.1 1111.0 278.4 1113.9 278.8 1117.6 275.9 1118.4 272.1 1120.6 271.5 1124.8 274.6 1129.4 278.0 1135.8 280.0 1134.2 285.6 1130.2 290.3 1132.6 292.2 1134.5 299.0 1133.7 300.5 1130.5 302.7 1127.8 302.0 1123.2 302.0 1122.4 305.3 1115.8 304.2 Z" fill="#d0609a"/><path d="M1120.6 271.5 1122.4 270.4 1124.8 267.4 1126.7 263.0 1129.9 261.2 1133.1 261.7 1132.6 266.1 1129.9 268.3 1129.9 272.5 1130.2 275.5 1129.4 278.0 1124.8 274.6 Z" fill="#cb52a4"/><path d="M1133.1 261.7 1135.3 260.8 1137.7 259.0 1136.9 254.9 1140.6 254.9 1142.7 257.2 1143.0 258.5 1145.9 257.6 1149.7 256.7 1151.8 259.0 1152.9 265.2 1154.0 271.7 1146.5 274.6 1150.7 280.8 1149.9 281.6 1148.6 285.6 1141.9 286.0 1139.5 286.0 1134.2 285.6 1135.8 280.0 1129.4 278.0 1130.2 275.5 1129.9 272.5 1129.9 268.3 1132.6 266.1 Z" fill="#f5a85a"/><path d="M1134.2 285.6 1139.5 286.0 1141.7 288.4 1140.9 291.1 1137.9 292.2 1132.6 292.2 1130.2 290.3 Z" fill="#f9b84a"/><path d="M1139.5 286.0 1141.9 286.0 1148.6 285.6 1149.9 281.6 1154.0 280.8 1159.0 281.2 1159.6 284.0 1157.4 288.0 1156.6 289.5 1150.5 289.9 1146.5 288.4 1141.7 288.4 Z" fill="#f0936a"/><path d="M1133.7 300.5 1134.5 299.0 1132.6 292.2 1137.9 292.2 1140.9 291.1 1141.7 288.4 1146.5 288.4 1150.5 289.9 1150.5 293.0 1146.7 294.2 1146.7 297.9 1149.9 300.9 1151.8 305.3 1156.9 307.1 1162.0 311.7 1162.8 314.5 1159.3 312.0 1158.2 314.1 1159.6 317.6 1155.8 320.7 1156.9 317.6 1155.6 313.8 1151.8 311.0 1149.1 309.6 1144.1 305.3 1141.4 301.3 1137.7 297.9 Z" fill="#d04898"/><path d="M1147.3 320.0 1155.6 320.0 1154.2 325.0 1147.3 322.4 Z" fill="#d04898"/><path d="M1138.5 309.6 1139.5 316.9 1136.6 317.6 1135.8 310.6 Z" fill="#d04898"/><path d="M1139.0 303.1 1138.5 308.9 1136.9 304.9 Z" fill="#d0609a"/></g></svg>
<span class="t" id="tEu" style="top:263.00px;font-size:16px;color:#6a6a6a;left:1134.24px;transform-origin:0 0;transform:scaleX(0.9569)">EUROOPPA</span>
<span class="t" id="tAtl1" style="top:333.00px;font-size:11px;color:#8c8c8c;left:984.00px;transform-origin:0 0;transform:scaleX(1.0336)">Atlantin</span>
<span class="t" id="tAtl2" style="top:344.00px;font-size:11px;color:#8c8c8c;left:979.60px;transform-origin:0 0;transform:scaleX(1.0231)">valtameri</span>
<span class="t" id="tAAS" style="top:244.00px;font-size:16px;color:#6a6a6a;clip-path:inset(0 8px 0 0);left:1365.50px;transform-origin:0 0;transform:scaleX(1.0369)">AAS</span>
<span class="t" id="tBing" style="top:374.00px;font-size:12.5px;color:#222;left:854.62px;transform-origin:0 0;transform:scaleX(0.9806)">Bing</span>
<span class="t" id="tCopy" style="top:384.00px;font-size:8.2px;color:#555;left:1165.80px;transform-origin:0 0;transform:scaleX(1.0193)">© 2021 TomTom, © 2021 Microsoft Corporation</span>
<span class="t" id="tTerms" style="top:384.00px;font-size:8.2px;color:#3a70c0;text-decoration:underline;left:1345.20px;transform-origin:0 0;transform:scaleX(1.0139)">Terms</span>
<svg style="left:0;top:0" width="1600" height="740"><path d="M840.100 372.800l2.900 1v9.300l3.600-1.900-1.800-.9-1.100-2.900 7.500 2.600v3.300l-8.300 4.900-2.800-2z" fill="#111"/></svg>
<svg style="left:0;top:0" width="1600" height="740"><rect x="858.600" y="585.400" width="121.700" height="9.200" fill="#ffaa00"/><rect x="1009.500" y="518.4" width="120.500" height="9.2" fill="#ebebeb"/><rect x="1070.3" y="518.4" width="34.3" height="9.2" fill="#ffaa00"/><rect x="1069.600" y="516.8" width="1" height="12.4" fill="#444"/><path d="M980.300 590C996 590 992 523 1009.500 523" fill="none" stroke="#333" stroke-width="1.25"/><rect x="1009.500" y="563.5" width="120.500" height="8.9" fill="#ebebeb"/><rect x="1070.3" y="563.5" width="17.5" height="8.9" fill="#ffaa00"/><rect x="1069.600" y="561.9" width="1" height="12.1" fill="#444"/><path d="M980.300 590C996 590 992 567.95 1009.500 567.95" fill="none" stroke="#333" stroke-width="1.25"/><rect x="1009.500" y="607.6" width="120.500" height="9.4" fill="#ebebeb" stroke="#b8b8b8" stroke-width="0.8"/><rect x="1070.3" y="607.6" width="16.2" height="9.4" fill="#ffaa00"/><rect x="1069.600" y="606" width="1" height="12.6" fill="#444"/><path d="M980.300 590C996 590 992 612.3 1009.500 612.3" fill="none" stroke="#a8196b" stroke-width="1.6"/><rect x="1009.500" y="652.7" width="120.500" height="8.9" fill="#ebebeb"/><rect x="1041.4" y="652.7" width="28.3" height="8.9" fill="#e8720c"/><rect x="1069.600" y="651.1" width="1" height="12.1" fill="#444"/><path d="M980.300 590C996 590 992 657.15 1009.500 657.15" fill="none" stroke="#333" stroke-width="1.25"/><path d="M1131 612H1158" stroke="#a8196b" stroke-width="1.300" stroke-dasharray="1.600 2.150" fill="none"/><rect x="1159.300" y="607.600" width="121.500" height="9.500" fill="#ffaa00"/><path d="M1287.600 611.700h8M1291.600 607.700v8" stroke="#999" stroke-width="1" fill="none"/><rect x="1009.6" y="459.600" width="121" height="2" fill="#b5338a"/><rect x="1159.6" y="459.600" width="121" height="2" fill="#b5338a"/><path d="M1122.4 448.600l7.600 7.600M1130 448.600l-7.600 7.600" stroke="#8a8a8a" stroke-width="1" fill="none"/><path d="M1273 448.600l7.600 7.600M1280.6 448.600l-7.600 7.600" stroke="#8a8a8a" stroke-width="1" fill="none"/><path d="M996.4 456.800v-2.300c-1.600-.9-2.600-2.400-2.600-4.200a4.500 4.500 0 0 1 9 0c0 1.800-1 3.300-2.600 4.200v2.300zM996.6 458.600h3.400" fill="none" stroke="#555" stroke-width="1"/><path d="M1147.1 456.800v-2.300c-1.600-.9-2.600-2.400-2.600-4.200a4.500 4.500 0 0 1 9 0c0 1.800-1 3.300-2.600 4.200v2.300zM1147.3 458.600h3.400" fill="none" stroke="#a05a80" stroke-width="1"/><path d="M1060 501l6.700-6.700 6.700 6.700" fill="none" stroke="#8a8a8a" stroke-width="1.100"/></svg>
<span class="t" id="tIT" style="top:446.00px;font-size:11px;color:#333;left:1008.56px;transform-origin:0 0;transform:scaleX(1.0404)">IT Area</span>
<span class="t" id="tSR" style="top:446.00px;font-size:11px;color:#333;left:1160.00px;transform-origin:0 0;transform:scaleX(1.0503)">Sales Region</span>
<span class="t" id="tEn0" style="top:467.00px;font-size:10px;color:#333;left:1010.00px;transform-origin:0 0;transform:scaleX(0.9517)">Enablement</span>
<span class="t" id="tVP" style="top:598.00px;font-size:11px;font-weight:bold;color:#252423;left:864.00px;transform-origin:0 0;transform:scaleX(0.9612)">Var Plan</span>
<span class="t" id="tVPv" style="top:611.00px;font-size:11px;color:#666;left:864.00px;transform-origin:0 0;transform:scaleX(0.9624)">2 129 759,32</span>
<span class="t" id="tN1" style="top:531.00px;font-size:11px;color:#555;left:1014.40px;transform-origin:0 0;transform:scaleX(0.9858)">BU Support</span>
<span class="t" id="tN1v" style="top:544.00px;font-size:11px;color:#777;left:1014.40px;transform-origin:0 0;transform:scaleX(0.9648)">727 398,44</span>
<span class="t" id="tN2" style="top:576.00px;font-size:11px;color:#555;left:1014.30px;transform-origin:0 0;transform:scaleX(0.9681)">Governance</span>
<span class="t" id="tN2v" style="top:589.00px;font-size:11px;color:#777;left:1014.30px;transform-origin:0 0;transform:scaleX(0.9557)">380 308,81</span>
<span class="t" id="tN3" style="top:621.00px;font-size:11px;font-weight:bold;color:#252423;left:1014.30px;transform-origin:0 0;transform:scaleX(0.9843)">Enablement</span>
<span class="t" id="tN3v" style="top:634.00px;font-size:11px;color:#777;left:1014.30px;transform-origin:0 0;transform:scaleX(0.9557)">348 236,27</span>
<span class="t" id="tN4" style="top:665.00px;font-size:11px;color:#555;left:1014.30px;transform-origin:0 0;transform:scaleX(0.9939)">Functional</span>
<span class="t" id="tN4v" style="top:678.00px;font-size:11px;color:#777;left:1014.30px;transform-origin:0 0;transform:scaleX(0.9778)">-585 271,85</span>
<span class="t" id="tE1" style="top:621.00px;font-size:11px;font-weight:bold;color:#252423;left:1165.00px;transform-origin:0 0;transform:scaleX(0.9609)">Europe</span>
<span class="t" id="tE1v" style="top:635.00px;font-size:11px;color:#777;left:1165.00px;transform-origin:0 0;transform:scaleX(0.9520)">348 236,27</span>
<svg style="left:0;top:0" width="1600" height="740"><path d="M1348.500 740l1-2 1 2z" fill="#3a70c0"/><path d="M1359.500 738.300v2M1361 738.500h4.500v1.500" stroke="#444" stroke-width="1" fill="none"/><path d="M1385.500 740a3.200 2.500 0 0 1 6.400 0" stroke="#444" stroke-width="1.200" fill="none"/></svg>
</body></html>
